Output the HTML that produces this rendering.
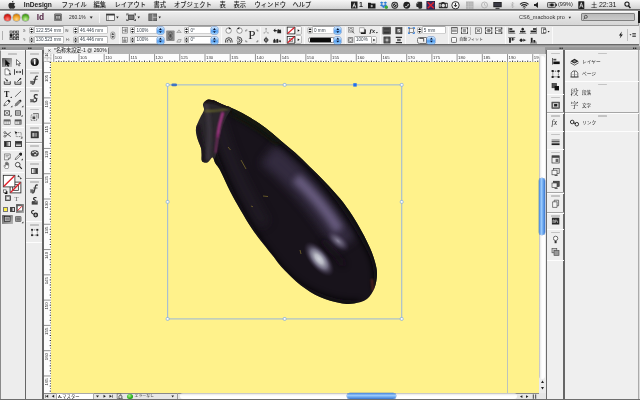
<!DOCTYPE html>
<html lang="ja"><head><meta charset="utf-8"><title>InDesign</title><style>
html,body{margin:0;padding:0}
body{width:640px;height:400px;overflow:hidden;position:relative;background:#969696;font-family:"Liberation Sans","Noto Sans CJK JP",sans-serif;}
body div,body svg{position:absolute;box-sizing:border-box}
.t{white-space:nowrap;line-height:1.2}
</style></head><body>
<div style="left:-4px;top:-4px;width:648px;height:408px;background:#b0b0b0;filter:blur(.3px)"><div style="left:4px;top:4px;width:640px;height:400px;background:#969696;overflow:hidden">
<div style="left:0px;top:0px;width:640px;height:10px;background:linear-gradient(#f6f6f6,#e2e2e2 60%,#d2d2d2);border-bottom:1px solid #6e6e6e"></div>
<svg style="left:8px;top:0px;" width="8" height="10" viewBox="-0.4 -0.5 8 10" preserveAspectRatio="none"><path d="M3.500 2.600C2.900 2.600 2.500 2.200 1.900 2.200 .9 2.200 0 3.100 0 4.700 0 6.300 1.100 8.300 2 8.300 2.500 8.300 2.800 8 3.500 8 4.200 8 4.400 8.300 5 8.300 5.900 8.300 6.600 6.900 6.900 6.100 6.200 5.800 5.800 5.200 5.800 4.500 5.800 3.800 6.100 3.300 6.700 3 6.300 2.500 5.700 2.200 5.100 2.200 4.400 2.200 4 2.600 3.500 2.600ZM3.400 2.100C3.400 1.200 4.100 .4 5 .3 5.100 1.200 4.400 2.100 3.400 2.100Z" fill="#2c2c2c"/></svg>
<div class="t" style="left:23.8px;top:0.8px;font-size:6.65px;color:#1c1c1c;font-weight:bold;font-weight:bold">InDesign</div>
<div class="t" style="left:61.5px;top:1px;font-size:6.3px;color:#1c1c1c;font-weight:normal;font-weight:500">ファイル</div>
<div class="t" style="left:93.5px;top:1px;font-size:6.3px;color:#1c1c1c;font-weight:normal;font-weight:500">編集</div>
<div class="t" style="left:114.5px;top:1px;font-size:6.3px;color:#1c1c1c;font-weight:normal;font-weight:500">レイアウト</div>
<div class="t" style="left:153.5px;top:1px;font-size:6.3px;color:#1c1c1c;font-weight:normal;font-weight:500">書式</div>
<div class="t" style="left:174px;top:1px;font-size:6.3px;color:#1c1c1c;font-weight:normal;font-weight:500">オブジェクト</div>
<div class="t" style="left:219.5px;top:1px;font-size:6.3px;color:#1c1c1c;font-weight:normal;font-weight:500">表</div>
<div class="t" style="left:233.5px;top:1px;font-size:6.3px;color:#1c1c1c;font-weight:normal;font-weight:500">表示</div>
<div class="t" style="left:254.5px;top:1px;font-size:6.3px;color:#1c1c1c;font-weight:normal;font-weight:500">ウィンドウ</div>
<div class="t" style="left:292.5px;top:1px;font-size:6.3px;color:#1c1c1c;font-weight:normal;font-weight:500">ヘルプ</div>
<svg style="left:351px;top:1px;" width="13" height="8" viewBox="0 -0.5 13 8" preserveAspectRatio="none"><path d="M0 0h6.500v7H0z" fill="#222"/><path d="M3.250 1L1.300 6h1l.4-1.200h1.100L4.200 6h1zM3.250 2.600l.35 1.400h-.7z" fill="#eee"/></svg>
<div class="t" style="left:359px;top:0.8px;font-size:7px;color:#222;font-weight:bold;">1</div>
<svg style="left:368px;top:1px;" width="8" height="8" viewBox="0 -0.5 8 8" preserveAspectRatio="none"><path d="M0 1.200h2.500l.8.900H7.500V7H0z" fill="#1a1a1a"/><path d="M3.750 3.300v2.400M2.600 4.500h2.300" stroke="#ddd" stroke-width=".8"/></svg>
<svg style="left:379px;top:1px;" width="10" height="9" viewBox="-0.5 -0.2 10 9" preserveAspectRatio="none"><path d="M2.200.4L4 1.500 2.200 2.700.4 1.500zM5.800.4L7.600 1.500 5.800 2.700 4 1.500zM2.200 2.900L4 4 2.200 5.200.4 4zM5.800 2.900L7.600 4 5.800 5.200 4 4zM4 4.400l1.700 1.100L4 6.700 2.300 5.500z" fill="#2b7bd6"/><circle cx="6.800" cy="6" r="1.700" fill="#3aa93a"/></svg>
<svg style="left:391px;top:1px;" width="8" height="8" viewBox="0 -0.5 8 8" preserveAspectRatio="none"><circle cx="3.750" cy="3.750" r="3.400" fill="#2a2a2a"/><circle cx="3.750" cy="3.750" r="2.200" fill="none" stroke="#ddd" stroke-width=".7"/><path d="M2.500 5l2.500-2.500" stroke="#ddd" stroke-width=".8"/></svg>
<svg style="left:403px;top:1px;" width="8" height="8" viewBox="0 -0.5 8 8" preserveAspectRatio="none"><circle cx="3.750" cy="3.750" r="3.400" fill="#222"/><path d="M2.200 5.200c1.500.3 3-.8 3.100-2.700" stroke="#e8e8e8" stroke-width="1" fill="none"/></svg>
<svg style="left:416px;top:1px;" width="7" height="8" viewBox="0 -0.5 7 8" preserveAspectRatio="none"><path d="M1.800.3h3.200c.8 0 1.200.5 1.200 1.300v3.900c0 1-.5 1.700-1.500 1.700H3.500c-.7 0-1-.4-1-1 0-.5-.3-.7-.9-.7C.7 5.500.3 5 .3 4.200V2z" fill="#2a2a2a"/><path d="M.3 2h1.500V.3" stroke="#bbb" stroke-width=".5" fill="none"/></svg>
<svg style="left:426px;top:1px;" width="9" height="9" viewBox="-0.5 0 9 9" preserveAspectRatio="none"><rect x=".4" y=".4" width="7.700" height="7.700" fill="#3a2a6a" stroke="#1a1a3a" stroke-width=".8"/><path d="M1.200 1.200L7.300 7.300M7.300 1.200L1.200 7.300" stroke="#e0222a" stroke-width="1.300"/></svg>
<svg style="left:438px;top:2px;" width="10" height="7" viewBox="-0.5 0 10 7" preserveAspectRatio="none"><rect x=".3" y=".8" width="8.900" height="5.400" rx=".8" fill="#2a2a2a"/><rect x="3" y="0" width="3" height="1.200" fill="#2a2a2a"/><circle cx="4.750" cy="3.500" r="1.700" fill="#e0e0e0"/><rect x="1" y="1.800" width="1.200" height="3" fill="#ddd"/><rect x="7.300" y="1.800" width="1.200" height="3" fill="#ddd"/></svg>
<svg style="left:451px;top:1px;" width="9" height="9" viewBox="0 0 9 9" preserveAspectRatio="none"><circle cx="4.500" cy="4.250" r="3.700" fill="#f4f4f4" stroke="#222" stroke-width=".9"/><path d="M4.500 1.800v3.600M3 4l1.500 1.800L6 4" stroke="#222" stroke-width=".9" fill="none"/></svg>
<svg style="left:466px;top:1px;" width="8" height="8" viewBox="0 -0.5 8 8" preserveAspectRatio="none"><rect width="7.500" height="7.500" fill="#b4b4b4"/><path d="M2.500 0v7.500M5 0v7.500M0 2.500h7.500M0 5h7.500" stroke="#c8c8c8" stroke-width=".5"/></svg>
<svg style="left:481px;top:1px;" width="7" height="8" viewBox="0 -0.5 7 8" preserveAspectRatio="none"><circle cx="3.500" cy="3.500" r="3" fill="none" stroke="#aaa" stroke-width=".8"/><path d="M3.500 1.600v2l1.400 1" stroke="#aaa" stroke-width=".7" fill="none"/></svg>
<svg style="left:493px;top:1px;" width="9" height="8" viewBox="0 -0.8 9 8" preserveAspectRatio="none"><rect x=".3" y=".2" width="8.400" height="5.200" fill="#222"/><rect x="1.200" y="1" width="6.600" height="3.500" fill="#3a3a44"/><path d="M2.500 6.500h4" stroke="#222" stroke-width="1"/></svg>
<svg style="left:510px;top:1px;" width="5" height="8" viewBox="-0.5 -0.5 5 8" preserveAspectRatio="none"><path d="M.6 2l2.600 3L1.900 6.500V.5l1.300 1.500-2.600 3" stroke="#aaa" stroke-width=".6" fill="none"/></svg>
<svg style="left:519px;top:1px;" width="10" height="8" viewBox="-0.5 -0.8 10 8" preserveAspectRatio="none"><path d="M.5 2.500a6 6 0 0 1 8.500 0" stroke="#222" stroke-width="1.100" fill="none"/><path d="M1.900 4a4 4 0 0 1 5.700 0" stroke="#222" stroke-width="1.100" fill="none"/><path d="M3.300 5.400a2 2 0 0 1 2.900 0" stroke="#222" stroke-width="1" fill="none"/><circle cx="4.750" cy="6.300" r=".6" fill="#222"/></svg>
<svg style="left:534px;top:2px;" width="6" height="6" viewBox="0 0 6 6" preserveAspectRatio="none"><path d="M0 2h1.600L4 0v6L1.600 4H0z" fill="#222"/></svg>
<svg style="left:547px;top:2px;" width="10" height="6" viewBox="0 -0.2 10 6" preserveAspectRatio="none"><rect x=".4" y=".4" width="8.200" height="4.700" rx=".8" fill="none" stroke="#222" stroke-width=".8"/><rect x="8.900" y="1.700" width=".9" height="2.100" fill="#222"/><rect x="1.200" y="1.200" width="6.600" height="3.100" fill="#b8b8b8"/><path d="M2.400 2.750h1.400M3.800 1.700h2v2.100h-2zM5.800 2.200h1M5.800 3.300h1" stroke="#1a1a1a" stroke-width=".7" fill="#1a1a1a"/></svg>
<div class="t" style="left:558px;top:1.4px;font-size:5.6px;color:#222;font-weight:normal;">(99%)</div>
<svg style="left:578px;top:1px;" width="7" height="8" viewBox="-0.3 -0.2 7 8" preserveAspectRatio="none"><rect width="6" height="7.800" rx=".6" fill="#1e1e1e"/><path d="M3 1.500L1.400 6.300M3 1.500l1.600 4.800M2 4.700h2" stroke="#f0f0f0" stroke-width=".8" fill="none"/></svg>
<div class="t" style="left:591.1px;top:1.1px;font-size:6.2px;color:#1a1a1a;font-weight:normal;font-weight:500">土</div>
<div class="t" style="left:598.9px;top:0.7px;font-size:7.05px;color:#1a1a1a;font-weight:normal;">22:31</div>
<svg style="left:624px;top:1px;" width="7" height="8" viewBox="-0.3 -0.4 7 8" preserveAspectRatio="none"><circle cx="2.700" cy="2.700" r="2.100" fill="none" stroke="#1a1a1a" stroke-width="1.100"/><path d="M4.200 4.400L6.100 6.700" stroke="#1a1a1a" stroke-width="1.400"/></svg>
<div style="left:0px;top:10.5px;width:640px;height:14.5px;background:linear-gradient(#eeeeee,#e0e0e0 50%,#d6d6d6);border-top:1px solid #fafafa"></div>
<div style="left:638.3px;top:10.5px;width:1.7px;height:12px;background:#1a1a1a"></div>
<div style="left:638.3px;top:22.5px;width:1.7px;height:24px;background:#cfcfcf;border-left:0.600px solid #9a9a9a"></div>
<div style="left:4.0px;top:13.700px;width:7px;height:7px;border-radius:50%;background:radial-gradient(circle at 50% 75%,#ff8a80 0%,#d9231c 55%,#8a1510 100%);box-shadow:0 0 0 .4px rgba(60,60,60,.6)"></div>
<div style="left:13.100000000000001px;top:13.700px;width:7px;height:7px;border-radius:50%;background:radial-gradient(circle at 50% 75%,#ffd98a 0%,#eb9a1c 55%,#9a5a10 100%);box-shadow:0 0 0 .4px rgba(60,60,60,.6)"></div>
<div style="left:22.2px;top:13.700px;width:7px;height:7px;border-radius:50%;background:radial-gradient(circle at 50% 75%,#c8f0a0 0%,#5ab02c 55%,#2a6a14 100%);box-shadow:0 0 0 .4px rgba(60,60,60,.6)"></div>
<div class="t" style="left:36.8px;top:12.2px;font-size:8.4px;color:#4d1f3f;font-weight:bold;letter-spacing:-.1px">Id</div>
<svg style="left:54px;top:13px;" width="8" height="8" viewBox="0 -0.5 8 8" preserveAspectRatio="none"><rect x=".3" y=".3" width="7.400" height="6.900" rx=".8" fill="#8a8a8a" stroke="#5a5a5a" stroke-width=".6"/><rect x="1.400" y="1.600" width="5.200" height="4.400" fill="#4a4a4a"/><rect x="2" y="2.400" width="1.800" height="2.800" fill="#aaa"/><rect x="4.300" y="2.400" width="1.700" height="2.800" fill="#bbb"/></svg>
<div class="t" style="left:69px;top:13.6px;font-size:6px;color:#2a2a2a;font-weight:normal;transform:scaleX(0.82);transform-origin:0 0;">260.1%</div>
<svg style="left:89px;top:16px;" width="4" height="3" viewBox="-0.747 -0.655 4.267 3.273" preserveAspectRatio="none"><path d="M0 0h3.200L1.600 2.400z" fill="#222"/></svg>
<div style="left:99px;top:12.5px;width:1px;height:10px;background:linear-gradient(90deg,#bcbcbc 50%,#f4f4f4 50%)"></div>
<svg style="left:106px;top:13px;" width="9" height="8" viewBox="0 -0.6 9 8" preserveAspectRatio="none"><rect x=".4" y=".4" width="8.200" height="6.600" fill="#f4f4f4" stroke="#444" stroke-width=".7"/><rect x=".4" y=".4" width="8.200" height="1.500" fill="#3a3a3a"/><path d="M2.200 2v5" stroke="#555" stroke-width=".5"/></svg>
<svg style="left:116px;top:16px;" width="3" height="3" viewBox="-0.2 -0.5 3 3" preserveAspectRatio="none"><path d="M0 0h2.400L1.200 2z" fill="#222"/></svg>
<svg style="left:126px;top:13px;" width="10" height="8" viewBox="-0.5 -0.6 10 8" preserveAspectRatio="none"><rect x="2" y="1.400" width="5.500" height="4.600" fill="#777" stroke="#333" stroke-width=".7"/><path d="M0 .4h2.200M0 7h2.200M7.300 .4h2.200M7.300 7h2.200M.4 0v2M.4 5.400v2M9.100 0v2M9.100 5.400v2" stroke="#333" stroke-width=".7"/></svg>
<svg style="left:137px;top:16px;" width="3" height="3" viewBox="-0.5 -0.5 3 3" preserveAspectRatio="none"><path d="M0 0h2.400L1.200 2z" fill="#222"/></svg>
<svg style="left:148px;top:13px;" width="9" height="8" viewBox="-0.5 -0.6 9 8" preserveAspectRatio="none"><rect x=".3" y=".3" width="7.900" height="6.800" fill="#777" stroke="#444" stroke-width=".6"/><path d="M4.250 .3v6.800M4.250 3.700h4" stroke="#ddd" stroke-width=".6"/></svg>
<svg style="left:158px;top:16px;" width="3" height="3" viewBox="-0.5 -0.5 3 3" preserveAspectRatio="none"><path d="M0 0h2.400L1.200 2z" fill="#222"/></svg>
<div class="t" style="left:518.6px;top:13.5px;font-size:6px;color:#333;font-weight:normal;transform:scaleX(0.92);transform-origin:0 0;">CS6_macbook pro</div>
<svg style="left:568px;top:16px;" width="3" height="3" viewBox="-0.65 -0.842 3.25 3.158" preserveAspectRatio="none"><path d="M0 0h2.600L1.300 2z" fill="#222"/></svg>
<div style="left:580.5px;top:13.4px;width:54px;height:7.6px;background:linear-gradient(#bababa,#cbcbcb);border:0.700px solid #808080;border-radius:1px"></div>
<svg style="left:583px;top:14px;" width="5" height="6" viewBox="0 -0.8 5 6" preserveAspectRatio="none"><circle cx="2.800" cy="2" r="1.500" fill="none" stroke="#333" stroke-width=".7"/><path d="M1.800 3.100L.5 4.600" stroke="#333" stroke-width=".8"/></svg>
<div style="left:0px;top:25px;width:638.5px;height:20px;background:#ececec;border-top:0.700px solid #9a9a9a;border-bottom:0.800px solid #6a6a6a"></div>
<div style="left:2px;top:30.5px;width:1px;height:9.5px;background:#b0b0b0"></div>
<svg style="left:9px;top:30px;" width="10" height="10" viewBox="-0.5 -0.5 10 10" preserveAspectRatio="none"><rect x="0.5" y="0.5" width="2.200" height="2.200" fill="#f8f8f8" stroke="#222" stroke-width=".6"/><rect x="0.5" y="3.8" width="2.200" height="2.200" fill="#111" stroke="#222" stroke-width=".6"/><rect x="0.5" y="7.1" width="2.200" height="2.200" fill="#f8f8f8" stroke="#222" stroke-width=".6"/><rect x="3.8" y="0.5" width="2.200" height="2.200" fill="#f8f8f8" stroke="#222" stroke-width=".6"/><rect x="3.8" y="3.8" width="2.200" height="2.200" fill="#f8f8f8" stroke="#222" stroke-width=".6"/><rect x="3.8" y="7.1" width="2.200" height="2.200" fill="#f8f8f8" stroke="#222" stroke-width=".6"/><rect x="7.1" y="0.5" width="2.200" height="2.200" fill="#f8f8f8" stroke="#222" stroke-width=".6"/><rect x="7.1" y="3.8" width="2.200" height="2.200" fill="#f8f8f8" stroke="#222" stroke-width=".6"/><rect x="7.1" y="7.1" width="2.200" height="2.200" fill="#f8f8f8" stroke="#222" stroke-width=".6"/><path d="M1.600 1.600h6.600v6.600H1.600z" fill="none" stroke="#222" stroke-width=".3"/></svg>
<div class="t" style="left:22.5px;top:27.9px;font-size:4.3px;color:#444;font-weight:normal;transform:scaleX(0.8);transform-origin:0 0;">X:</div>
<div class="t" style="left:22.5px;top:37.4px;font-size:4.3px;color:#444;font-weight:normal;transform:scaleX(0.8);transform-origin:0 0;">Y:</div>
<svg style="left:29px;top:27px;" width="5" height="7" viewBox="-0.2 0 5 7" preserveAspectRatio="none"><rect x=".3" y=".3" width="4.200" height="6.200" rx="1.400" fill="#fcfcfc" stroke="#888" stroke-width=".55"/><path d="M2.400 .9L3.900 2.900H.9zM2.400 5.900L3.900 3.900H.9z" fill="#1a1a1a"/></svg>
<div style="left:34.6px;top:27.4px;width:28.8px;height:6px;background:#fff;box-shadow:0 0 0 .5px #b4b4b4, 0 -.5px 0 .3px #8a8a8a"></div>
<div class="t" style="left:35.800000000000004px;top:27.7px;font-size:4.6px;color:#3c4650;font-weight:normal;">122.554 mm</div>
<svg style="left:29px;top:36px;" width="5" height="8" viewBox="-0.2 -0.5 5 8" preserveAspectRatio="none"><rect x=".3" y=".3" width="4.200" height="6.200" rx="1.400" fill="#fcfcfc" stroke="#888" stroke-width=".55"/><path d="M2.400 .9L3.900 2.900H.9zM2.400 5.900L3.900 3.900H.9z" fill="#1a1a1a"/></svg>
<div style="left:34.6px;top:36.9px;width:28.8px;height:6px;background:#fff;box-shadow:0 0 0 .5px #b4b4b4, 0 -.5px 0 .3px #8a8a8a"></div>
<div class="t" style="left:35.800000000000004px;top:37.199999999999996px;font-size:4.6px;color:#3c4650;font-weight:normal;">130.523 mm</div>
<div class="t" style="left:65.3px;top:27.9px;font-size:4.3px;color:#444;font-weight:normal;transform:scaleX(0.8);transform-origin:0 0;">W:</div>
<div class="t" style="left:65.6px;top:37.4px;font-size:4.3px;color:#444;font-weight:normal;transform:scaleX(0.85);transform-origin:0 0;">H:</div>
<svg style="left:73px;top:27px;" width="5" height="7" viewBox="-0.2 0 5 7" preserveAspectRatio="none"><rect x=".3" y=".3" width="4.200" height="6.200" rx="1.400" fill="#fcfcfc" stroke="#888" stroke-width=".55"/><path d="M2.400 .9L3.900 2.900H.9zM2.400 5.900L3.900 3.900H.9z" fill="#1a1a1a"/></svg>
<div style="left:78.8px;top:27.4px;width:28.6px;height:6px;background:#fff;box-shadow:0 0 0 .5px #b4b4b4, 0 -.5px 0 .3px #8a8a8a"></div>
<div class="t" style="left:80.0px;top:27.7px;font-size:4.6px;color:#3c4650;font-weight:normal;">46.446 mm</div>
<svg style="left:73px;top:36px;" width="5" height="8" viewBox="-0.2 -0.5 5 8" preserveAspectRatio="none"><rect x=".3" y=".3" width="4.200" height="6.200" rx="1.400" fill="#fcfcfc" stroke="#888" stroke-width=".55"/><path d="M2.400 .9L3.900 2.900H.9zM2.400 5.900L3.900 3.900H.9z" fill="#1a1a1a"/></svg>
<div style="left:78.8px;top:36.9px;width:28.6px;height:6px;background:#fff;box-shadow:0 0 0 .5px #b4b4b4, 0 -.5px 0 .3px #8a8a8a"></div>
<div class="t" style="left:80.0px;top:37.199999999999996px;font-size:4.6px;color:#3c4650;font-weight:normal;">46.446 mm</div>
<svg style="left:110px;top:31px;" width="6" height="9" viewBox="-0.3 -0.5 6 9" preserveAspectRatio="none"><rect x=".4" y=".4" width="4.200" height="7.200" rx="2" fill="#d8d8d8" stroke="#666" stroke-width=".5"/><path d="M2.500 1.400L3.800 3.200H1.200zM2.500 6.600L3.800 4.800H1.200z" fill="#222"/></svg>
<div style="left:118.8px;top:27px;width:1px;height:16.5px;background:linear-gradient(90deg,#b0b0b0 50%,#fafafa 50%)"></div>
<svg style="left:122px;top:27px;" width="6" height="7" viewBox="0 -0.4 6 7" preserveAspectRatio="none"><rect x=".3" y=".3" width="5" height="5.400" fill="#eee" stroke="#555" stroke-width=".5"/><rect x="2.600" y="1.200" width="2" height="3.600" fill="#888"/><path d="M.8 3h1.600" stroke="#222" stroke-width=".5"/></svg>
<svg style="left:122px;top:36px;" width="6" height="7" viewBox="0 -0.9 6 7" preserveAspectRatio="none"><rect x=".3" y=".3" width="5" height="5.400" fill="#eee" stroke="#555" stroke-width=".5"/><rect x="1.200" y="2.600" width="3.200" height="2.400" fill="#888"/><path d="M2.800 .8v1.600" stroke="#222" stroke-width=".5"/></svg>
<svg style="left:130px;top:27px;" width="5" height="7" viewBox="-0.1 0 5 7" preserveAspectRatio="none"><rect x=".3" y=".3" width="4.200" height="6.200" rx="1.400" fill="#fcfcfc" stroke="#888" stroke-width=".55"/><path d="M2.400 .9L3.900 2.900H.9zM2.400 5.900L3.900 3.900H.9z" fill="#1a1a1a"/></svg>
<div style="left:135.4px;top:27.4px;width:22px;height:6px;background:#fff;box-shadow:0 0 0 .5px #b4b4b4, 0 -.5px 0 .3px #8a8a8a"></div>
<div class="t" style="left:136.6px;top:27.7px;font-size:4.6px;color:#3c4650;font-weight:normal;">100%</div>
<div style="left:156.89999999999998px;top:27.0px;width:7px;height:7.2px;border-radius:1.800px;background:linear-gradient(#cfe6fd,#7ab8f6 45%,#4c98ee 55%,#9ad0fc);box-shadow:0 0 0 .4px #4a7cc8"></div>
<svg style="left:159px;top:28px;" width="3" height="6" viewBox="0 -0.1 3 6" preserveAspectRatio="none"><path d="M1.400 0L2.800 1.900H0zM1.400 5L2.800 3.100H0z" fill="#0a1430"/></svg>
<svg style="left:130px;top:36px;" width="5" height="8" viewBox="-0.1 -0.5 5 8" preserveAspectRatio="none"><rect x=".3" y=".3" width="4.200" height="6.200" rx="1.400" fill="#fcfcfc" stroke="#888" stroke-width=".55"/><path d="M2.400 .9L3.900 2.900H.9zM2.400 5.900L3.900 3.900H.9z" fill="#1a1a1a"/></svg>
<div style="left:135.4px;top:36.9px;width:22px;height:6px;background:#fff;box-shadow:0 0 0 .5px #b4b4b4, 0 -.5px 0 .3px #8a8a8a"></div>
<div class="t" style="left:136.6px;top:37.199999999999996px;font-size:4.6px;color:#3c4650;font-weight:normal;">100%</div>
<div style="left:156.89999999999998px;top:36.5px;width:7px;height:7.2px;border-radius:1.800px;background:linear-gradient(#cfe6fd,#7ab8f6 45%,#4c98ee 55%,#9ad0fc);box-shadow:0 0 0 .4px #4a7cc8"></div>
<svg style="left:159px;top:37px;" width="3" height="6" viewBox="0 -0.6 3 6" preserveAspectRatio="none"><path d="M1.400 0L2.800 1.900H0zM1.400 5L2.800 3.100H0z" fill="#0a1430"/></svg>
<svg style="left:166px;top:30px;" width="9" height="11" viewBox="-0.2 -0.5 9 11" preserveAspectRatio="none"><rect width="8.400" height="10.500" rx=".8" fill="#8a8a8a"/><rect x="2.600" y="1.500" width="3.200" height="3.600" rx="1.400" fill="none" stroke="#555" stroke-width=".8"/><rect x="2.600" y="5.400" width="3.200" height="3.600" rx="1.400" fill="none" stroke="#555" stroke-width=".8"/><path d="M4.200 3.500v3.600" stroke="#444" stroke-width=".9"/></svg>
<svg style="left:176px;top:29px;" width="6" height="4" viewBox="-0.5 0 6 4" preserveAspectRatio="none"><path d="M.3 3.700h4.400L2.500 .8z" fill="#ddd" stroke="#555" stroke-width=".4"/></svg>
<svg style="left:176px;top:38px;" width="6" height="5" viewBox="-0.5 -0.5 6 5" preserveAspectRatio="none"><path d="M.3 3.700h3.400L4.700 1H1.700z" fill="#ddd" stroke="#555" stroke-width=".4"/></svg>
<svg style="left:184px;top:27px;" width="5" height="7" viewBox="-0.1 0 5 7" preserveAspectRatio="none"><rect x=".3" y=".3" width="4.200" height="6.200" rx="1.400" fill="#fcfcfc" stroke="#888" stroke-width=".55"/><path d="M2.400 .9L3.900 2.900H.9zM2.400 5.900L3.900 3.900H.9z" fill="#1a1a1a"/></svg>
<div style="left:189.3px;top:27.4px;width:22px;height:6px;background:#fff;box-shadow:0 0 0 .5px #b4b4b4, 0 -.5px 0 .3px #8a8a8a"></div>
<div class="t" style="left:190.5px;top:27.7px;font-size:4.6px;color:#3c4650;font-weight:normal;">0°</div>
<div style="left:210.89999999999998px;top:27.0px;width:7px;height:7.2px;border-radius:1.800px;background:linear-gradient(#cfe6fd,#7ab8f6 45%,#4c98ee 55%,#9ad0fc);box-shadow:0 0 0 .4px #4a7cc8"></div>
<svg style="left:213px;top:28px;" width="3" height="6" viewBox="0 -0.1 3 6" preserveAspectRatio="none"><path d="M1.400 0L2.800 1.900H0zM1.400 5L2.800 3.100H0z" fill="#0a1430"/></svg>
<svg style="left:184px;top:36px;" width="5" height="8" viewBox="-0.1 -0.5 5 8" preserveAspectRatio="none"><rect x=".3" y=".3" width="4.200" height="6.200" rx="1.400" fill="#fcfcfc" stroke="#888" stroke-width=".55"/><path d="M2.400 .9L3.900 2.900H.9zM2.400 5.900L3.900 3.900H.9z" fill="#1a1a1a"/></svg>
<div style="left:189.3px;top:36.9px;width:22px;height:6px;background:#fff;box-shadow:0 0 0 .5px #b4b4b4, 0 -.5px 0 .3px #8a8a8a"></div>
<div class="t" style="left:190.5px;top:37.199999999999996px;font-size:4.6px;color:#3c4650;font-weight:normal;">0°</div>
<div style="left:210.89999999999998px;top:36.5px;width:7px;height:7.2px;border-radius:1.800px;background:linear-gradient(#cfe6fd,#7ab8f6 45%,#4c98ee 55%,#9ad0fc);box-shadow:0 0 0 .4px #4a7cc8"></div>
<svg style="left:213px;top:37px;" width="3" height="6" viewBox="0 -0.6 3 6" preserveAspectRatio="none"><path d="M1.400 0L2.800 1.900H0zM1.400 5L2.800 3.100H0z" fill="#0a1430"/></svg>
<div style="left:221px;top:27px;width:1px;height:16.5px;background:linear-gradient(90deg,#b0b0b0 50%,#fafafa 50%)"></div>
<svg style="left:225px;top:27px;" width="8" height="7" viewBox="-0.3 0 8 7" preserveAspectRatio="none"><circle cx="3.300" cy="3.600" r="2.700" fill="#f8f8f8" stroke="#666" stroke-width=".65"/><path d="M3.400 .2L5.800 1.200 3.600 2.400Z" fill="#222"/></svg>
<svg style="left:236px;top:27px;" width="7" height="7" viewBox="0 0 7 7" preserveAspectRatio="none"><circle cx="3.500" cy="3.600" r="2.700" fill="#f8f8f8" stroke="#666" stroke-width=".65"/><path d="M3.400 .2L1 1.200 3.200 2.400Z" fill="#222"/></svg>
<svg style="left:225px;top:36px;" width="8" height="8" viewBox="0 -0.8 8 8" preserveAspectRatio="none"><path d="M.5 5.800V4.200A3.300 3.300 0 0 1 7.100 4.200V5.800M2.200 5.800V4.400A1.600 1.600 0 0 1 5.400 4.400V5.800" stroke="#333" stroke-width=".85" fill="none"/><path d="M3.800 0V6.400" stroke="#555" stroke-width=".4" stroke-dasharray=".7 .5"/></svg>
<svg style="left:236px;top:36px;" width="7" height="9" viewBox="-0.4 -0.6 7 9" preserveAspectRatio="none"><path d="M.6 .5H2.200A3.300 3.300 0 0 1 2.200 7.100H.6M.6 2.200H2A1.600 1.600 0 0 1 2 5.400H.6" stroke="#333" stroke-width=".85" fill="none"/><path d="M0 3.800H6.400" stroke="#555" stroke-width=".4" stroke-dasharray=".7 .5"/></svg>
<svg style="left:245px;top:29px;" width="14" height="14" viewBox="-0.4 -0.6 14 14" preserveAspectRatio="none"><path d="M.4 2V.4H2M10.800 .4h1.600V2M12.400 10.600v1.600h-1.600M2 12.200H.4v-1.600" stroke="#444" stroke-width=".6" fill="none"/><text x="6.600" y="9.800" text-anchor="middle" font-family="Liberation Serif,serif" font-size="13" fill="#222">P</text></svg>
<div style="left:260.3px;top:27px;width:1px;height:16.5px;background:linear-gradient(90deg,#b0b0b0 50%,#fafafa 50%)"></div>
<svg style="left:263px;top:27px;" width="6" height="7" viewBox="-0.3 -0.6 6 7" preserveAspectRatio="none"><circle cx="2.800" cy="1.200" r=".9" fill="#999"/><path d="M2.800 2v2M.8 5.500l2-1.500 2 1.500" stroke="#999" stroke-width=".6" fill="none"/><circle cx=".8" cy="5.300" r=".6" fill="#999"/><circle cx="4.800" cy="5.300" r=".6" fill="#999"/></svg>
<svg style="left:273px;top:27px;" width="9" height="7" viewBox="-0.3 -0.6 9 7" preserveAspectRatio="none"><path d="M0 3l2-2v1.400h1.500v1.200H2V5z" fill="#222"/><path d="M4 5.600V2.400l1-.9 1 .9.900-.7.900 1.200v2.700z" fill="#222"/></svg>
<svg style="left:263px;top:36px;" width="6" height="8" viewBox="-0.3 -0.8 6 8" preserveAspectRatio="none"><circle cx="2.800" cy="3.200" r="1.800" fill="none" stroke="#222" stroke-width=".8"/><path d="M2.800 0v6.400M.6 3.200h4.400" stroke="#222" stroke-width=".7"/></svg>
<svg style="left:273px;top:37px;" width="9" height="7" viewBox="-0.3 -0.2 9 7" preserveAspectRatio="none"><path d="M0 5.600V3l1.200-1.600L2.400 3v2.600zM3 5.600V2.400l1-.9 1 .9v3.200z" fill="#222"/><path d="M5.400 3.400h1.200V2.200l1.200 1.800-1.200 1.800V4.600H5.400z" fill="#222"/></svg>
<div style="left:284px;top:27px;width:1px;height:16.5px;background:linear-gradient(90deg,#b0b0b0 50%,#fafafa 50%)"></div>
<svg style="left:286px;top:26px;" width="10" height="9" viewBox="-0.8 -0.7 10 9" preserveAspectRatio="none"><rect x=".4" y=".4" width="7.6000000000000005" height="6.8" fill="#fff" stroke="#222" stroke-width=".8"/><path d="M.8 6.8L7.6000000000000005 .8" stroke="#e0202a" stroke-width="1.2"/></svg>
<svg style="left:286px;top:36px;" width="10" height="8" viewBox="-0.8 0 10 8" preserveAspectRatio="none"><rect x=".4" y=".4" width="7.600" height="6.800" fill="#fff" stroke="#222" stroke-width=".8"/><rect x="2.400" y="2.200" width="3.600" height="3.200" fill="#ddd" stroke="#444" stroke-width=".5"/><path d="M.8 6.800L7.600 .8" stroke="#e0202a" stroke-width="1.200"/></svg>
<div style="left:296.3px;top:27px;width:4.6px;height:7px;background:linear-gradient(#ffffff,#e6e6e6);box-shadow:0 0 0 .5px #8a8a8a;border-radius:.8px"></div>
<svg style="left:297px;top:29px;" width="3" height="3" viewBox="-0.7 -0.2 3 3" preserveAspectRatio="none"><path d="M0 0L2 1.300 0 2.600z" fill="#111"/></svg>
<div style="left:296.3px;top:36.3px;width:4.6px;height:7px;background:linear-gradient(#ffffff,#e6e6e6);box-shadow:0 0 0 .5px #8a8a8a;border-radius:.8px"></div>
<svg style="left:297px;top:38px;" width="3" height="4" viewBox="-0.7 -0.5 3 4" preserveAspectRatio="none"><path d="M0 0L2 1.300 0 2.600z" fill="#111"/></svg>
<div style="left:304px;top:27px;width:1px;height:16.5px;background:linear-gradient(90deg,#b0b0b0 50%,#fafafa 50%)"></div>
<svg style="left:307px;top:27px;" width="6" height="7" viewBox="-0.6 0 6 7" preserveAspectRatio="none"><rect x=".3" y=".3" width="4.200" height="6.200" rx="1.400" fill="#fcfcfc" stroke="#888" stroke-width=".55"/><path d="M2.400 .9L3.900 2.900H.9zM2.400 5.900L3.900 3.900H.9z" fill="#1a1a1a"/></svg>
<div style="left:312.8px;top:27.4px;width:21.6px;height:6px;background:#fff;box-shadow:0 0 0 .5px #b4b4b4, 0 -.5px 0 .3px #8a8a8a"></div>
<div class="t" style="left:314.0px;top:27.7px;font-size:4.6px;color:#3c4650;font-weight:normal;">0 mm</div>
<div style="left:334.2px;top:27.0px;width:7.2px;height:7.2px;border-radius:1.800px;background:linear-gradient(#cfe6fd,#7ab8f6 45%,#4c98ee 55%,#9ad0fc);box-shadow:0 0 0 .4px #4a7cc8"></div>
<svg style="left:336px;top:28px;" width="4" height="6" viewBox="-0.4 -0.1 4 6" preserveAspectRatio="none"><path d="M1.400 0L2.800 1.900H0zM1.400 5L2.800 3.100H0z" fill="#0a1430"/></svg>
<div style="left:307.7px;top:36.6px;width:27px;height:6.8px;background:#fff;border:0.500px solid #888;border-radius:2.500px"></div>
<div style="left:309.8px;top:38.0px;width:21.4px;height:3.6px;background:#0a0a0a;border-radius:.6px"></div>
<div style="left:334.2px;top:36.5px;width:7.2px;height:7.2px;border-radius:1.800px;background:linear-gradient(#cfe6fd,#7ab8f6 45%,#4c98ee 55%,#9ad0fc);box-shadow:0 0 0 .4px #4a7cc8"></div>
<svg style="left:336px;top:37px;" width="4" height="6" viewBox="-0.4 -0.6 4 6" preserveAspectRatio="none"><path d="M1.400 0L2.800 1.900H0zM1.400 5L2.800 3.100H0z" fill="#0a1430"/></svg>
<div style="left:345px;top:27px;width:1px;height:16.5px;background:linear-gradient(90deg,#b0b0b0 50%,#fafafa 50%)"></div>
<svg style="left:348px;top:27px;" width="7" height="7" viewBox="-0.3 -0.2 7 7" preserveAspectRatio="none"><rect x=".3" y=".3" width="4.600" height="4.600" fill="#e8e8e8" stroke="#666" stroke-width=".5"/><circle cx="2.600" cy="2.600" r="1.400" fill="none" stroke="#444" stroke-width=".5"/><path d="M3.700 3.800L5.800 6.200" stroke="#444" stroke-width=".8"/></svg>
<svg style="left:359px;top:27px;" width="7" height="8" viewBox="0 -0.4 7 8" preserveAspectRatio="none"><rect x="1.800" y="1.800" width="5" height="4.800" rx=".6" fill="#1a1a1a"/><rect x=".3" y=".3" width="5" height="4.600" rx=".5" fill="#f8f8f8" stroke="#666" stroke-width=".5"/></svg>
<div class="t" style="left:369.500px;top:26.600px;font-size:7px;font-style:italic;font-weight:bold;color:#222;font-family:'Liberation Serif',serif">fx</div>
<svg style="left:376px;top:32px;" width="2" height="2" viewBox="0 0 2 2" preserveAspectRatio="none"><path d="M0 0h1.800L.9 1.400z" fill="#222"/></svg>
<svg style="left:347px;top:37px;" width="7" height="6" viewBox="-0.8 0 7 6" preserveAspectRatio="none"><rect x=".3" y=".3" width="4.800" height="5.400" rx=".5" fill="#8a8a8a" stroke="#666" stroke-width=".5"/><path d="M1.300 1.500L4.100 4.500M4.100 1.500L1.300 4.500" stroke="#fff" stroke-width="1"/></svg>
<div style="left:354.8px;top:36.9px;width:16.4px;height:6px;background:#fff;box-shadow:0 0 0 .5px #b4b4b4, 0 -.5px 0 .3px #8a8a8a"></div>
<div class="t" style="left:356.0px;top:37.199999999999996px;font-size:4.6px;color:#3c4650;font-weight:normal;">100%</div>
<div style="left:372px;top:36.6px;width:4.4px;height:6.8px;background:linear-gradient(#ffffff,#e6e6e6);box-shadow:0 0 0 .5px #8a8a8a;border-radius:.8px"></div>
<svg style="left:373px;top:38px;" width="3" height="4" viewBox="-0.3 -0.7 3 4" preserveAspectRatio="none"><path d="M0 0L2 1.300 0 2.600z" fill="#111"/></svg>
<div style="left:379.6px;top:27px;width:1px;height:16.5px;background:linear-gradient(90deg,#b0b0b0 50%,#fafafa 50%)"></div>
<svg style="left:382px;top:26px;" width="9" height="9" viewBox="-0.4 -0.8 9 9" preserveAspectRatio="none"><rect width="8.600" height="7.800" rx=".8" fill="#5a5a5a"/><rect x="1.400" y="1.200" width="5.800" height="5.400" fill="#2a2a2a"/><path d="M1.400 2.200h5.800M1.400 3.600h5.800M1.400 5h5.800" stroke="#888" stroke-width=".5"/></svg>
<svg style="left:395px;top:27px;" width="8" height="8" viewBox="-0.5 -0.3 8 8" preserveAspectRatio="none"><rect x=".3" y=".3" width="6.200" height="6.200" fill="#4a4a4a" stroke="#333" stroke-width=".6"/><rect x="2" y="1.800" width="2.800" height="3.200" fill="#e4e4e4"/><path d="M2.600 4.400L4.400 2.400" stroke="#333" stroke-width=".6"/></svg>
<svg style="left:383px;top:36px;" width="8" height="8" viewBox="-0.6 -0.6 8 8" preserveAspectRatio="none"><rect x=".3" y=".3" width="6.200" height="6.200" fill="#555" stroke="#333" stroke-width=".6"/><circle cx="3.400" cy="3.400" r="1.700" fill="#ccc" stroke="#333" stroke-width=".4"/><path d="M3.400 .6V6.200M.6 3.400H6.200" stroke="#999" stroke-width=".5"/></svg>
<svg style="left:395px;top:36px;" width="8" height="8" viewBox="-0.5 -0.6 8 8" preserveAspectRatio="none"><path d="M.3 .8h6.200M.3 6h6.200" stroke="#333" stroke-width="1.200"/><rect x="1.600" y="2.200" width="3.600" height="2.400" fill="#666"/></svg>
<div style="left:405.3px;top:27px;width:1px;height:16.5px;background:linear-gradient(90deg,#b0b0b0 50%,#fafafa 50%)"></div>
<svg style="left:408px;top:27px;" width="7" height="7" viewBox="0 0 7 7" preserveAspectRatio="none"><rect x="1.200" y="1.200" width="4.200" height="4.400" fill="#f4f4f4" stroke="#444" stroke-width=".6"/><path d="M.2 2V.3h1.700M4.700 .3h1.700V2M6.400 4.800v1.700H4.700M1.900 6.500H.2V4.800" stroke="#2a7be0" stroke-width=".9" fill="none"/></svg>
<svg style="left:417px;top:27px;" width="5" height="7" viewBox="-0.2 0 5 7" preserveAspectRatio="none"><rect x=".3" y=".3" width="4.200" height="6.200" rx="1.400" fill="#fcfcfc" stroke="#888" stroke-width=".55"/><path d="M2.400 .9L3.900 2.900H.9zM2.400 5.900L3.900 3.900H.9z" fill="#1a1a1a"/></svg>
<div style="left:422.6px;top:27.4px;width:22.6px;height:6px;background:#fff;box-shadow:0 0 0 .5px #b4b4b4, 0 -.5px 0 .3px #8a8a8a"></div>
<div class="t" style="left:423.8px;top:27.7px;font-size:4.6px;color:#3c4650;font-weight:normal;">5 mm</div>
<div style="left:416.5px;top:36.5px;width:10.8px;height:7px;background:linear-gradient(#fff,#e4e4e4);border:0.500px solid #777;border-radius:2.500px 0 0 2.500px"></div>
<svg style="left:419px;top:37px;" width="6" height="5" viewBox="0 -0.9 6 5" preserveAspectRatio="none"><path d="M.3 .5h4.400v3.200" stroke="#222" stroke-width=".8" fill="none"/></svg>
<div style="left:427.3px;top:36.5px;width:8.2px;height:7.2px;border-radius:1.800px;background:linear-gradient(#cfe6fd,#7ab8f6 45%,#4c98ee 55%,#9ad0fc);box-shadow:0 0 0 .4px #4a7cc8"></div>
<svg style="left:430px;top:37px;" width="3" height="6" viewBox="0 -0.6 3 6" preserveAspectRatio="none"><path d="M1.400 0L2.800 1.900H0zM1.400 5L2.800 3.100H0z" fill="#0a1430"/></svg>
<div style="left:448px;top:27px;width:1px;height:16.5px;background:linear-gradient(90deg,#b0b0b0 50%,#fafafa 50%)"></div>
<svg style="left:451px;top:27px;" width="7" height="7" viewBox="0 -0.3 7 7" preserveAspectRatio="none"><rect x=".3" y=".6" width="6.200" height="5.400" fill="#f6f6f6" stroke="#444" stroke-width=".6"/><rect x="1" y="2.200" width="4.800" height="2.400" fill="#999"/><path d="M.3 .3h6.200" stroke="#222" stroke-width=".6"/></svg>
<svg style="left:461px;top:27px;" width="7" height="7" viewBox="0 -0.3 7 7" preserveAspectRatio="none"><rect x=".3" y=".6" width="6.200" height="5.400" fill="#f6f6f6" stroke="#444" stroke-width=".6"/><rect x="1.800" y="1.500" width="3.200" height="3.600" fill="#999"/><path d="M.3 0v2M6.500 0v2M.3 4.600v2M6.500 4.600v2" stroke="#222" stroke-width=".7"/></svg>
<div style="left:470.3px;top:27px;width:0.6px;height:7.5px;background:#b8b8b8"></div>
<svg style="left:475px;top:27px;" width="7" height="7" viewBox="0 -0.3 7 7" preserveAspectRatio="none"><rect x=".3" y=".6" width="6.200" height="5.400" fill="#f6f6f6" stroke="#444" stroke-width=".6"/><path d="M1.400 1.700l3.800 3.200M5.200 1.700L1.400 4.900" stroke="#333" stroke-width=".6"/><rect x="2.200" y="2.300" width="2.400" height="2" fill="#888"/></svg>
<svg style="left:485px;top:27px;" width="8" height="7" viewBox="-0.3 -0.3 8 7" preserveAspectRatio="none"><rect x=".3" y=".6" width="6.200" height="5.400" fill="#f6f6f6" stroke="#444" stroke-width=".6"/><rect x="2" y="1.600" width="2.800" height="3.400" fill="#777"/><path d="M.3 0v2M6.500 0v2M.3 4.600v2M6.500 4.600v2" stroke="#222" stroke-width=".7"/><path d="M1 3.300h1M4.800 3.300h1" stroke="#222" stroke-width=".5"/></svg>
<svg style="left:495px;top:27px;" width="8" height="7" viewBox="-0.3 -0.3 8 7" preserveAspectRatio="none"><rect x=".3" y=".6" width="6.200" height="5.400" fill="#f6f6f6" stroke="#444" stroke-width=".6"/><rect x="3" y="1.600" width="2.800" height="3.400" fill="#888"/><path d="M.3 0v2M6.500 0v2M.3 4.600v2M6.500 4.600v2" stroke="#222" stroke-width=".7"/><path d="M.8 3.300h1.800" stroke="#222" stroke-width=".5"/></svg>
<div style="left:451px;top:36.8px;width:6.2px;height:6.2px;background:linear-gradient(#fff,#e8e8e8);border:0.500px solid #777;border-radius:1.200px"></div>
<div class="t" style="left:459.2px;top:37.7px;font-size:4px;color:#2a2a2a;font-weight:normal;">自動フィット</div>
<div style="left:505.3px;top:27px;width:1px;height:16.5px;background:linear-gradient(90deg,#b0b0b0 50%,#fafafa 50%)"></div>
<svg style="left:508px;top:27px;" width="8" height="7" viewBox="-0.3 -0.6 8 7" preserveAspectRatio="none"><path d="M.4 0v5.200" stroke="#222" stroke-width=".6"/><rect x="1" y=".6" width="3" height="1.600" fill="#222"/><rect x="1" y="3" width="5.400" height="1.800" fill="#222"/><path d="M0 6h7" stroke="#222" stroke-width=".5"/></svg>
<svg style="left:519px;top:27px;" width="8" height="7" viewBox="-0.2 -0.6 8 7" preserveAspectRatio="none"><path d="M3.500 0v5.200" stroke="#222" stroke-width=".5"/><ellipse cx="3.500" cy="1.600" rx="1.400" ry="1.100" fill="#222"/><rect x=".8" y="3.200" width="5.400" height="1.600" fill="#222"/><path d="M0 6h7" stroke="#222" stroke-width=".5"/></svg>
<svg style="left:530px;top:27px;" width="7" height="7" viewBox="0 -0.6 7 7" preserveAspectRatio="none"><path d="M6.600 0v5.200" stroke="#222" stroke-width=".6"/><rect x="3" y=".6" width="3" height="1.600" fill="#222"/><rect x=".6" y="3" width="5.400" height="1.800" fill="#222"/><path d="M0 6h7" stroke="#222" stroke-width=".5"/></svg>
<svg style="left:541px;top:27px;" width="7" height="7" viewBox="0 -0.4 7 7" preserveAspectRatio="none"><path d="M.4 .4h4v5.600H.4zM2 1.600h3" stroke="#222" stroke-width=".6" fill="#f4f4f4"/><rect x="2.600" y="2.400" width="2.400" height="3" fill="#fff" stroke="#222" stroke-width=".5"/></svg>
<svg style="left:547px;top:31px;" width="3" height="2" viewBox="-0.6 0 3 2" preserveAspectRatio="none"><path d="M0 0h2L1 1.600z" fill="#222"/></svg>
<svg style="left:508px;top:37px;" width="8" height="7" viewBox="-0.3 0 8 7" preserveAspectRatio="none"><path d="M0 .4h7" stroke="#222" stroke-width=".6"/><rect x=".8" y="1" width="1.800" height="4.800" fill="#222"/><rect x="3.400" y="1" width="1.800" height="2.600" fill="#222"/><path d="M5.800 1.500v1.500" stroke="#222" stroke-width=".5"/></svg>
<svg style="left:519px;top:37px;" width="8" height="7" viewBox="-0.2 0 8 7" preserveAspectRatio="none"><path d="M0 3.200h7" stroke="#222" stroke-width=".5"/><ellipse cx="2" cy="3.200" rx="1.300" ry="1.700" fill="#222"/><path d="M4.200 1.600l2 1.600-2 1.600z" fill="#222"/></svg>
<svg style="left:530px;top:37px;" width="7" height="7" viewBox="0 0 7 7" preserveAspectRatio="none"><path d="M0 6h7" stroke="#222" stroke-width=".6"/><rect x=".8" y=".8" width="1.800" height="4.800" fill="#222"/><rect x="3.400" y="3" width="1.800" height="2.600" fill="#222"/><path d="M5.800 4v1.500" stroke="#222" stroke-width=".5"/></svg>
<div style="left:552px;top:27px;width:1px;height:16.5px;background:linear-gradient(90deg,#b0b0b0 50%,#fafafa 50%)"></div>
<svg style="left:618px;top:31px;" width="6" height="8" viewBox="-0.5 -0.6 6 8" preserveAspectRatio="none"><path d="M3.400 0L.4 3.800h1.800L1.200 7l3.200-4.200H2.600z" fill="#1a1a1a"/></svg>
<div style="left:627px;top:29px;width:0.6px;height:12px;background:#c0c0c0"></div>
<svg style="left:629px;top:33px;" width="7" height="4" viewBox="-0.5 0 7 4" preserveAspectRatio="none"><path d="M0 1.200h2L1 2.600z" fill="#222"/><path d="M2.800 .5h3.600M2.800 2h3.600M2.800 3.500h3.600" stroke="#333" stroke-width=".8"/></svg>
<div style="left:0px;top:45.6px;width:640px;height:5px;background:linear-gradient(#b0b0b0,#989898 35%,#949494)"></div>
<svg style="left:2px;top:47px;" width="4" height="2" viewBox="-0.2 -0.6 4 2" preserveAspectRatio="none"><rect x="0" y="0" width="1.300" height="1.400" fill="#2a2a2a"/><rect x="2" y="0" width="1.300" height="1.400" fill="#2a2a2a"/></svg>
<svg style="left:28px;top:47px;" width="4" height="2" viewBox="-0.2 -0.6 4 2" preserveAspectRatio="none"><rect x="0" y="0" width="1.300" height="1.400" fill="#2a2a2a"/><rect x="2" y="0" width="1.300" height="1.400" fill="#2a2a2a"/></svg>
<svg style="left:559px;top:47px;" width="5" height="2" viewBox="-0.5 -0.6 5 2" preserveAspectRatio="none"><rect x="0" y="0" width="1.300" height="1.400" fill="#2a2a2a"/><rect x="2" y="0" width="1.300" height="1.400" fill="#2a2a2a"/></svg>
<svg style="left:633px;top:47px;" width="4" height="2" viewBox="0 -0.6 4 2" preserveAspectRatio="none"><rect x="0" y="0" width="1.300" height="1.400" fill="#2a2a2a"/><rect x="2" y="0" width="1.300" height="1.400" fill="#2a2a2a"/></svg>
<div style="left:0px;top:50.4px;width:24.8px;height:350px;background:#ededed;border-left:0.900px solid #8a8a8a;border-top:0.600px solid #fafafa"></div>
<div style="left:24.7px;top:50.4px;width:1.6px;height:350px;background:#666"></div>
<div style="left:26.3px;top:50.4px;width:16px;height:350px;background:#ededed;border-top:0.600px solid #fafafa"></div>
<div style="left:42.3px;top:50.4px;width:1.5px;height:350px;background:#666"></div>
<div style="left:8px;top:53.4px;width:9px;height:1.4px;background:#c4c4c4;border-radius:.5px"></div>
<div style="left:30.3px;top:53.4px;width:8.5px;height:1.4px;background:#c4c4c4;border-radius:.5px"></div>
<div style="left:1.8px;top:58.1px;width:10.4px;height:9.4px;background:linear-gradient(135deg,#5a5a5a,#8e8e8e 50%,#c8c8c8);border-radius:.6px"></div>
<svg style="left:5px;top:59px;" width="6" height="8" viewBox="-0.2 -0.7 6 8" preserveAspectRatio="none"><path d="M0 0V5.500L1.400 4.300 2.400 6.500 3.300 6.100 2.300 4H4.200Z" fill="#0a0a0a" stroke="#0a0a0a" stroke-width=".5" transform="translate(.3,.2)"/></svg>
<svg style="left:16px;top:59px;" width="6" height="8" viewBox="-0.1 -0.2 6 8" preserveAspectRatio="none"><path d="M0 0V5.500L1.400 4.300 2.400 6.500 3.300 6.100 2.300 4H4.200Z" fill="#fff" stroke="#222" stroke-width=".6" transform="translate(.4,.3)"/></svg>
<svg style="left:4px;top:68px;" width="7" height="8" viewBox="-0.6 -0.5 7 8" preserveAspectRatio="none"><path d="M.4 .4H3.400L5.200 2.200V6.400H.4Z" fill="#fdfdfd" stroke="#444" stroke-width=".6"/><path d="M3.400 .4V2.200H5.200" fill="none" stroke="#444" stroke-width=".5"/><path d="M4 4.600L6.200 6.800V4.900Z" fill="#111"/></svg>
<svg style="left:13px;top:69px;" width="11" height="6" viewBox="-0.5 0 11 6" preserveAspectRatio="none"><path d="M1 .2V5.800M9 .2V5.800" stroke="#333" stroke-width=".9"/><path d="M2.600 3H7.400" stroke="#333" stroke-width=".6"/><path d="M3.800 1.800L2.200 3 3.800 4.200ZM6.200 1.800L7.800 3 6.200 4.200Z" fill="#222"/></svg>
<svg style="left:3px;top:78px;" width="8" height="7" viewBox="-0.8 0 8 7" preserveAspectRatio="none"><path d="M.5 3.200V6.300H6.500V3.200" fill="none" stroke="#333" stroke-width=".9"/><path d="M.5 4.800H6.500" stroke="#555" stroke-width=".6"/><path d="M1.200 .3L3.600 3" stroke="#222" stroke-width=".9"/><path d="M4 3.400L1.900 3 3.700 1.400Z" fill="#222"/></svg>
<svg style="left:14px;top:78px;" width="8" height="7" viewBox="-0.4 0 8 7" preserveAspectRatio="none"><path d="M.5 3.200V6.300H6.500V3.200" fill="none" stroke="#333" stroke-width=".9"/><path d="M.5 4.800H6.500" stroke="#555" stroke-width=".6"/><path d="M3 3.600L6.200 .6" stroke="#222" stroke-width="1"/><path d="M6.800 0L6.600 2 4.900 .3Z" fill="#222"/></svg>
<div style="left:2px;top:87.3px;width:21.5px;height:1.2px;background:linear-gradient(#a6a6a6 50%,#fdfdfd 50%)"></div>
<div class="t" style="left:4px;top:89.500px;font-size:8px;font-weight:bold;font-family:'Liberation Serif',serif;color:#1a1a1a">T</div>
<svg style="left:10px;top:96px;" width="2" height="2" viewBox="0 -0.4 2 2" preserveAspectRatio="none"><path d="M0 1.600h1.800V0z" fill="#222"/></svg>
<svg style="left:14px;top:90px;" width="8" height="8" viewBox="-0.5 -0.5 8 8" preserveAspectRatio="none"><path d="M.5 6.300L6.500 .5" stroke="#333" stroke-width=".7"/></svg>
<svg style="left:3px;top:99px;" width="8" height="8" viewBox="-0.4 -0.3 8 8" preserveAspectRatio="none"><path d="M.5 6.600L1.300 3.900 4 1.300 6 3.200 3.300 5.900Z" fill="#fafafa" stroke="#333" stroke-width=".6"/><path d="M4 1.300L5.300 .2 7.100 2 6 3.200Z" fill="#222"/><path d="M.5 6.600L2.800 4.200" stroke="#333" stroke-width=".5"/></svg>
<svg style="left:10px;top:105px;" width="3" height="3" viewBox="-0.6 -0.6 3 3" preserveAspectRatio="none"><path d="M0 1.600h1.800V0z" fill="#222"/></svg>
<svg style="left:14px;top:99px;" width="8" height="8" viewBox="-0.6 -0.3 8 8" preserveAspectRatio="none"><path d="M.5 6.600L1.100 4.500 4.600 1 6.100 2.500 2.600 6Z" fill="#888" stroke="#333" stroke-width=".5"/><path d="M4.600 1L5.600 .1 7.100 1.600 6.100 2.500Z" fill="#1a1a1a"/><path d="M.5 6.600L1.100 4.500 2.600 6Z" fill="#eee" stroke="#333" stroke-width=".4"/></svg>
<svg style="left:21px;top:105px;" width="3" height="3" viewBox="-0.6 -0.6 3 3" preserveAspectRatio="none"><path d="M0 1.600h1.800V0z" fill="#222"/></svg>
<svg style="left:4px;top:110px;" width="6" height="6" viewBox="0 -0.4 6 6" preserveAspectRatio="none"><rect x=".4" y=".4" width="5.200" height="4.400" fill="#f4f4f4" stroke="#333" stroke-width=".7"/><path d="M.4 .4L5.600 4.800M5.600 .4L.4 4.800" stroke="#333" stroke-width=".55"/></svg>
<svg style="left:9px;top:115px;" width="3" height="2" viewBox="-0.8 0 3 2" preserveAspectRatio="none"><path d="M0 1.600h1.800V0z" fill="#222"/></svg>
<svg style="left:15px;top:110px;" width="6" height="6" viewBox="0 -0.4 6 6" preserveAspectRatio="none"><rect x=".4" y=".4" width="5.200" height="4.400" fill="#c8c8c8" stroke="#333" stroke-width=".7"/><rect x="1.300" y="1.300" width="3.400" height="2.600" fill="#a4a4a4"/></svg>
<svg style="left:20px;top:115px;" width="3" height="2" viewBox="-0.8 0 3 2" preserveAspectRatio="none"><path d="M0 1.600h1.800V0z" fill="#222"/></svg>
<svg style="left:3px;top:119px;" width="8" height="6" viewBox="-0.6 -0.4 8 6" preserveAspectRatio="none"><rect x=".4" y=".4" width="6.200" height="4.600" fill="#f4f4f4" stroke="#555" stroke-width=".6"/><path d="M.4 1.700H6.600M2.500 1.700V5M4.600 1.700V5" stroke="#555" stroke-width=".5"/><rect x=".4" y=".4" width="6.200" height="1.300" fill="#666"/></svg>
<svg style="left:14px;top:119px;" width="8" height="6" viewBox="-0.6 -0.4 8 6" preserveAspectRatio="none"><rect x=".4" y=".4" width="6.200" height="4.600" fill="#f4f4f4" stroke="#555" stroke-width=".6"/><path d="M.4 1.700H6.600M2.500 1.700V5M4.600 1.700V5" stroke="#555" stroke-width=".5"/><rect x=".4" y=".4" width="6.200" height="1.300" fill="#555"/><rect x="4.600" y="1.700" width="2" height="3.300" fill="#888"/></svg>
<div style="left:2px;top:127.2px;width:21.5px;height:1.2px;background:linear-gradient(#a6a6a6 50%,#fdfdfd 50%)"></div>
<svg style="left:3px;top:131px;" width="8" height="7" viewBox="-0.4 -0.2 8 7" preserveAspectRatio="none"><path d="M2.400 1.800L7.400 5.400M2.400 4.600L7.400 1" stroke="#333" stroke-width=".75"/><circle cx="1.500" cy="1.400" r="1" fill="none" stroke="#333" stroke-width=".65"/><circle cx="1.500" cy="5" r="1" fill="none" stroke="#333" stroke-width=".65"/></svg>
<svg style="left:14px;top:131px;" width="9" height="8" viewBox="-0.4 0 9 8" preserveAspectRatio="none"><rect x="1.800" y="1.600" width="5" height="4" fill="none" stroke="#333" stroke-width=".6" stroke-dasharray="1 .7"/><path d="M.2 .2L3 1.200 1.200 3Z" fill="#1a1a1a"/><path d="M6.200 7.400H8V5.600Z" fill="#222"/></svg>
<div style="left:3.600px;top:141.200px;width:7.200px;height:5.400px;background:linear-gradient(90deg,#111,#f4f4f4);border:0.600px solid #444"></div>
<div style="left:14.600px;top:141.200px;width:7.200px;height:5.400px;background:linear-gradient(#222,#555 40%,#f4f4f4);border:0.600px solid #444"></div>
<div style="left:2px;top:149.6px;width:21.5px;height:1.2px;background:linear-gradient(#a6a6a6 50%,#fdfdfd 50%)"></div>
<svg style="left:4px;top:153px;" width="7" height="8" viewBox="0 -0.653 7.6 8.706" preserveAspectRatio="none"><path d="M.4 .4h6.400v4.400L4.800 6.800H.4z" fill="#f4f4f4" stroke="#555" stroke-width=".7"/><path d="M1.600 2h4M1.600 3.500h3" stroke="#444" stroke-width=".5"/><path d="M6.800 4.800h-2v2" fill="none" stroke="#222" stroke-width=".5"/></svg>
<svg style="left:14px;top:152px;" width="8" height="8" viewBox="-0.889 -0.889 8.889 8.889" preserveAspectRatio="none"><path d="M.4 7.600l.6-1.800L5 1.800l1.200 1.200-4 4z" fill="#eee" stroke="#222" stroke-width=".6"/><path d="M4.400 1.200l2.400 2.400 1-1a1.200 1.200 0 0 0-2.400-2.400z" fill="#222"/></svg>
<svg style="left:21px;top:158px;" width="2" height="3" viewBox="0 -0.6 2 3" preserveAspectRatio="none"><path d="M0 1.600h1.800V0z" fill="#222"/></svg>
<svg style="left:3px;top:161px;" width="8" height="8" viewBox="-0.667 -0.681 8.889 9.081" preserveAspectRatio="none"><path d="M2 8c-.6-1.200-1.600-2.200-1.600-3.200 0-.5.700-.6 1.100 0l.5.700V1.600c0-.6.900-.6.900 0V4 .9c0-.6.900-.6.900 0V4 1.300c0-.6.900-.6.900 0v3V2.400c0-.6.900-.6.900 0v3.400c0 1-.5 1.500-.8 2.200z" fill="#fafafa" stroke="#444" stroke-width=".6"/></svg>
<svg style="left:14px;top:161px;" width="9" height="9" viewBox="-0.822 -0.843 9.243 9.486" preserveAspectRatio="none"><circle cx="3" cy="3" r="2.400" fill="#f4f4f4" stroke="#222" stroke-width=".8"/><path d="M4.800 4.800L7.200 7.400" stroke="#222" stroke-width="1.200"/></svg>
<div style="left:2px;top:172px;width:21.5px;height:1.2px;background:linear-gradient(#a6a6a6 50%,#fdfdfd 50%)"></div>
<svg style="left:9px;top:181px;" width="13" height="13" viewBox="-0.59 -0.59 12.78 12.78" preserveAspectRatio="none"><rect x=".5" y=".5" width="10.600" height="10.600" fill="#fff" stroke="#222" stroke-width=".8"/><rect x="3" y="3" width="5.600" height="5.600" fill="#ededed" stroke="#222" stroke-width=".7"/><path d="M.9 10.700L10.700 .9" stroke="#e0202a" stroke-width="1.300"/></svg>
<svg style="left:2px;top:174px;" width="14" height="14" viewBox="-0.8 -0.8 14 14" preserveAspectRatio="none"><rect x=".5" y=".5" width="11.600" height="11.600" fill="#fff" stroke="#222" stroke-width=".8"/><path d="M.9 11.700L11.700 .9" stroke="#e0202a" stroke-width="1.400"/></svg>
<svg style="left:17px;top:174px;" width="5" height="6" viewBox="-0.4 -0.8 5 6" preserveAspectRatio="none"><path d="M.6 1.400A3 3 0 0 1 3.400 3.800" stroke="#222" stroke-width=".6" fill="none"/><path d="M0 1.400L1.400 .2 1.500 2.400zM2.400 3.400l2-.2-1 1.400z" fill="#222"/></svg>
<svg style="left:3px;top:189px;" width="5" height="6" viewBox="0 -0.6 5 6" preserveAspectRatio="none"><rect x="1.600" y="1.600" width="2.800" height="2.800" fill="#111"/><rect x=".3" y=".3" width="2.800" height="2.800" fill="#fff" stroke="#111" stroke-width=".5"/></svg>
<svg style="left:5px;top:195px;" width="6" height="6" viewBox="0 -0.429 6.4 6.429" preserveAspectRatio="none"><rect x=".4" y=".4" width="5.600" height="5.200" fill="#999" stroke="#222" stroke-width=".7"/><rect x="1.800" y="1.800" width="2.800" height="2.400" fill="#eee"/></svg>
<div class="t" style="left:14.400px;top:195.200px;font-size:6.400px;font-family:'Liberation Serif',serif;color:#555">T</div>
<div style="left:3px;top:207px;width:5px;height:5px;background:#fff04a;border:0.600px solid #777"></div>
<div style="left:10px;top:207px;width:5px;height:5px;background:linear-gradient(90deg,#222,#fff);border:0.600px solid #444"></div>
<div style="left:16px;top:204.2px;width:7.6px;height:8.4px;background:linear-gradient(135deg,#5a5a5a,#b0b0b0);border-radius:.5px"></div>
<svg style="left:17px;top:205px;" width="6" height="7" viewBox="0 -0.6 6 7" preserveAspectRatio="none"><rect x=".3" y=".3" width="5" height="5" fill="#fff" stroke="#333" stroke-width=".5"/><path d="M.6 5L5 .6" stroke="#e0202a" stroke-width="1"/></svg>
<div style="left:1.6px;top:214.6px;width:11px;height:9px;background:linear-gradient(135deg,#5e5e5e,#b8b8b8);border-radius:.6px"></div>
<svg style="left:4px;top:216px;" width="7" height="6" viewBox="0 0 7 6" preserveAspectRatio="none"><rect x=".4" y=".4" width="5.600" height="5.200" fill="#ccc" stroke="#222" stroke-width=".7"/><rect x="1.400" y="1.400" width="3.600" height="3.200" fill="#888"/></svg>
<svg style="left:15px;top:216px;" width="7" height="6" viewBox="0 0 7 6" preserveAspectRatio="none"><rect x=".4" y=".4" width="5.600" height="5.200" rx=".8" fill="#aaa" stroke="#444" stroke-width=".7"/><rect x="1.400" y="1.400" width="3.600" height="3.200" fill="#777"/></svg>
<svg style="left:21px;top:221px;" width="3" height="3" viewBox="-0.6 -0.6 3 3" preserveAspectRatio="none"><path d="M0 1.600h1.800V0z" fill="#222"/></svg>
<svg style="left:30px;top:57px;" width="9" height="10" viewBox="-0.4 -0.7 9 10" preserveAspectRatio="none"><defs><radialGradient id="gi" cx=".4" cy=".3" r=".8"><stop offset="0" stop-color="#888"/><stop offset=".5" stop-color="#222"/><stop offset="1" stop-color="#000"/></radialGradient></defs><circle cx="4.300" cy="4.300" r="4.100" fill="url(#gi)"/><rect x="3.600" y="3.400" width="1.500" height="3.400" fill="#fff"/><circle cx="4.300" cy="2.200" r=".9" fill="#fff"/></svg>
<div style="left:26.3px;top:69.2px;width:16.2px;height:1.2px;background:linear-gradient(#a6a6a6 50%,#fdfdfd 50%)"></div>
<div style="left:30.3px;top:72.2px;width:8.5px;height:1.4px;background:#c4c4c4;border-radius:.5px"></div>
<svg style="left:30px;top:75px;" width="10" height="11" viewBox="-0.3 -0.5 10 11" preserveAspectRatio="none"><path d="M7.600 1C6.200 .3 5.300 1 5 2.600L4 7C3.700 8.500 2.800 9 1.600 8.400" stroke="#3a3a3a" stroke-width="1.250" fill="none"/><path d="M3 3.800H7.200" stroke="#3a3a3a" stroke-width=".8"/><rect x=".4" y="5.600" width="3" height="2.600" fill="#6a6a6a" stroke="#444" stroke-width=".4"/></svg>
<div style="left:26.3px;top:87.3px;width:16.2px;height:1.2px;background:linear-gradient(#a6a6a6 50%,#fdfdfd 50%)"></div>
<div style="left:30.3px;top:90.3px;width:8.5px;height:1.4px;background:#c4c4c4;border-radius:.5px"></div>
<svg style="left:30px;top:93px;" width="10" height="11" viewBox="-0.3 -0.8 10 11" preserveAspectRatio="none"><path d="M7.400 1.400C6 .2 3.800 .8 3.900 2.600 4 4.200 6.600 4.200 6.400 6.200 6.200 8 3.800 8.600 2.400 7.400" stroke="#3a3a3a" stroke-width="1.250" fill="none"/><path d="M3.400 4.600H7.400" stroke="#3a3a3a" stroke-width=".7"/><rect x=".4" y="5.600" width="3" height="2.600" fill="#6a6a6a" stroke="#444" stroke-width=".4"/></svg>
<div style="left:26.3px;top:105.6px;width:16.2px;height:1.2px;background:linear-gradient(#a6a6a6 50%,#fdfdfd 50%)"></div>
<div style="left:30.3px;top:108.6px;width:8.5px;height:1.4px;background:#c4c4c4;border-radius:.5px"></div>
<svg style="left:30px;top:113px;" width="9" height="8" viewBox="-0.7 0 9 8" preserveAspectRatio="none"><rect x=".4" y="2" width="5.600" height="5.600" fill="#f4f4f4" stroke="#333" stroke-width=".6" stroke-dasharray="1 .6"/><path d="M2.400 .4h5.200v5.200" fill="none" stroke="#333" stroke-width=".7"/><rect x="1.800" y="3.400" width="2.800" height="2.800" fill="#444"/></svg>
<div style="left:26.3px;top:124.2px;width:16.2px;height:1.2px;background:linear-gradient(#a6a6a6 50%,#fdfdfd 50%)"></div>
<div style="left:30.3px;top:127.2px;width:8.5px;height:1.4px;background:#c4c4c4;border-radius:.5px"></div>
<svg style="left:30px;top:131px;" width="9" height="8" viewBox="-0.7 -0.3 9 8" preserveAspectRatio="none"><rect x=".4" y=".4" width="7.200" height="6.200" fill="#333" stroke="#222" stroke-width=".6"/><rect x="1.600" y="1.600" width="2.200" height="3.800" fill="#bbb"/><rect x="4.400" y="1.600" width="2" height="3.800" fill="#888"/></svg>
<div style="left:26.3px;top:142.4px;width:16.2px;height:1.2px;background:linear-gradient(#a6a6a6 50%,#fdfdfd 50%)"></div>
<div style="left:30.3px;top:145.4px;width:8.5px;height:1.4px;background:#c4c4c4;border-radius:.5px"></div>
<svg style="left:30px;top:149px;" width="9" height="8" viewBox="-0.4 -0.4 9 8" preserveAspectRatio="none"><ellipse cx="4.300" cy="4" rx="4" ry="3.200" fill="#444"/><circle cx="2.600" cy="3" r=".8" fill="#eee"/><circle cx="4.600" cy="2.200" r=".8" fill="#eee"/><circle cx="6.400" cy="3.400" r=".8" fill="#eee"/><ellipse cx="4.800" cy="5.400" rx="1.200" ry=".8" fill="#ededed"/></svg>
<div style="left:26.3px;top:160.2px;width:16.2px;height:1.2px;background:linear-gradient(#a6a6a6 50%,#fdfdfd 50%)"></div>
<div style="left:30.3px;top:163.2px;width:8.5px;height:1.4px;background:#c4c4c4;border-radius:.5px"></div>
<div style="left:30.900000000000002px;top:167.800px;width:7.600px;height:6px;background:linear-gradient(90deg,#fff,#222);border:0.600px solid #555"></div>
<div style="left:26.3px;top:178.4px;width:16.2px;height:1.2px;background:linear-gradient(#a6a6a6 50%,#fdfdfd 50%)"></div>
<div style="left:30.3px;top:181.4px;width:8.5px;height:1.4px;background:#c4c4c4;border-radius:.5px"></div>
<svg style="left:30px;top:184px;" width="10" height="10" viewBox="-0.3 -0.2 10 10" preserveAspectRatio="none"><path d="M7.600 1C6.200 .3 5.300 1 5 2.600L4 7C3.700 8.500 2.800 9 1.600 8.400" stroke="#3a3a3a" stroke-width="1.250" fill="none"/><path d="M3 3.800H7.200" stroke="#3a3a3a" stroke-width=".8"/><rect x=".4" y="5.600" width="3" height="2.600" fill="#6a6a6a" stroke="#444" stroke-width=".4"/></svg>
<svg style="left:30px;top:197px;" width="9" height="8" viewBox="-0.7 0 9 8" preserveAspectRatio="none"><path d="M5.800 .8C4.400 .2 2.800.6 2.800 1.800 2.800 3 4.800 2.600 4.800 3.800S2.800 5.200 1.400 4.600" stroke="#333" stroke-width="1.200" fill="none"/><rect x="1" y="4.600" width="6" height="3" fill="#444"/><rect x="4" y="3.600" width="3" height="2" fill="#777"/></svg>
<svg style="left:30px;top:210px;" width="9" height="8" viewBox="-0.7 0 9 8" preserveAspectRatio="none"><path d="M3.400 .6C2 .2 .8 1 .8 2.200c0 1.400 2 1 2 2.200" stroke="#333" stroke-width="1.100" fill="none"/><circle cx="5" cy="5" r="2.400" fill="#222"/><path d="M5 3.600v2.800M3.600 5h2.800" stroke="#eee" stroke-width=".7"/></svg>
<div style="left:26.3px;top:221.3px;width:16.2px;height:1.2px;background:linear-gradient(#a6a6a6 50%,#fdfdfd 50%)"></div>
<div style="left:30.3px;top:224.3px;width:8.5px;height:1.4px;background:#c4c4c4;border-radius:.5px"></div>
<svg style="left:30px;top:228px;" width="9" height="9" viewBox="-0.7 -0.5 9 9" preserveAspectRatio="none"><rect x="1.400" y="1.400" width="5.200" height="5.200" fill="#f8f8f8" stroke="#333" stroke-width=".6" stroke-dasharray="1.200 .7"/><rect x=".4" y=".4" width="1.800" height="1.800" fill="#222"/><rect x="5.800" y=".4" width="1.800" height="1.800" fill="#222"/><rect x=".4" y="5.800" width="1.800" height="1.800" fill="#222"/><rect x="5.800" y="5.800" width="1.800" height="1.800" fill="#222"/></svg>
<div style="left:26.3px;top:241.5px;width:16px;height:1.2px;background:linear-gradient(#a6a6a6 50%,#fdfdfd 50%)"></div>
<div style="left:43.8px;top:46px;width:501.7px;height:8.1px;background:linear-gradient(#a2a2a2,#b3b3b3 20%,#b5b5b5)"></div>
<div style="left:43.8px;top:47.1px;width:65.4px;height:7px;background:linear-gradient(#f2f2f2,#e6e6e6);border-right:0.700px solid #7a7a7a;border-top:0.500px solid #fafafa"></div>
<svg style="left:48px;top:49px;" width="3" height="3" viewBox="0 -0.2 3 3" preserveAspectRatio="none"><path d="M.2 .2l2.200 2.200M2.400 .2L.2 2.400" stroke="#222" stroke-width=".6"/></svg>
<div class="t" style="left:54px;top:47.1px;font-size:5.8px;color:#222;font-weight:normal;transform:scaleX(0.873);transform-origin:0 0;">*名称未設定-1 @ 260%</div>
<div style="left:43.8px;top:54.1px;width:495.4px;height:8px;background:#fdfdfd"></div>
<div style="left:43.8px;top:53.8px;width:7.4px;height:346px;background:#fdfdfd"></div>
<svg style="left:43px;top:53px;" width="9" height="9" viewBox="-0.8 -0.8 9 9" preserveAspectRatio="none"><rect width="7.400" height="8" fill="#f6f6f6"/><path d="M3.400 0v8M0 4h7.400" stroke="#666" stroke-width=".5" stroke-dasharray=".8 .6"/><path d="M7.100 0v8M0 7.700h7.400" stroke="#555" stroke-width=".5" stroke-dasharray=".8 .6"/></svg>
<svg style="left:43px;top:54px;" width="497" height="9" viewBox="-0.8 -0.1 497 9" preserveAspectRatio="none"><path d="M9.95 0v8" stroke="#666" stroke-width=".7"/><path d="M12.47 7.1v0.9" stroke="#1a1a1a" stroke-width=".9"/><path d="M14.99 6.5v1.5" stroke="#1a1a1a" stroke-width=".9"/><path d="M17.51 7.1v0.9" stroke="#1a1a1a" stroke-width=".9"/><path d="M20.03 6.5v1.5" stroke="#1a1a1a" stroke-width=".9"/><path d="M22.56 7.1v0.9" stroke="#1a1a1a" stroke-width=".9"/><path d="M25.08 6.5v1.5" stroke="#1a1a1a" stroke-width=".9"/><path d="M27.60 7.1v0.9" stroke="#1a1a1a" stroke-width=".9"/><path d="M30.12 6.5v1.5" stroke="#1a1a1a" stroke-width=".9"/><path d="M32.64 7.1v0.9" stroke="#1a1a1a" stroke-width=".9"/><text x="10.95" y="4.600" font-size="4.300" fill="#333" font-family="Liberation Sans,sans-serif">100</text><path d="M35.16 0v8" stroke="#666" stroke-width=".7"/><path d="M37.68 7.1v0.9" stroke="#1a1a1a" stroke-width=".9"/><path d="M40.20 6.5v1.5" stroke="#1a1a1a" stroke-width=".9"/><path d="M42.72 7.1v0.9" stroke="#1a1a1a" stroke-width=".9"/><path d="M45.24 6.5v1.5" stroke="#1a1a1a" stroke-width=".9"/><path d="M47.77 7.1v0.9" stroke="#1a1a1a" stroke-width=".9"/><path d="M50.29 6.5v1.5" stroke="#1a1a1a" stroke-width=".9"/><path d="M52.81 7.1v0.9" stroke="#1a1a1a" stroke-width=".9"/><path d="M55.33 6.5v1.5" stroke="#1a1a1a" stroke-width=".9"/><path d="M57.85 7.1v0.9" stroke="#1a1a1a" stroke-width=".9"/><text x="36.16" y="4.600" font-size="4.300" fill="#333" font-family="Liberation Sans,sans-serif">105</text><path d="M60.37 0v8" stroke="#666" stroke-width=".7"/><path d="M62.89 7.1v0.9" stroke="#1a1a1a" stroke-width=".9"/><path d="M65.41 6.5v1.5" stroke="#1a1a1a" stroke-width=".9"/><path d="M67.93 7.1v0.9" stroke="#1a1a1a" stroke-width=".9"/><path d="M70.45 6.5v1.5" stroke="#1a1a1a" stroke-width=".9"/><path d="M72.98 7.1v0.9" stroke="#1a1a1a" stroke-width=".9"/><path d="M75.50 6.5v1.5" stroke="#1a1a1a" stroke-width=".9"/><path d="M78.02 7.1v0.9" stroke="#1a1a1a" stroke-width=".9"/><path d="M80.54 6.5v1.5" stroke="#1a1a1a" stroke-width=".9"/><path d="M83.06 7.1v0.9" stroke="#1a1a1a" stroke-width=".9"/><text x="61.37" y="4.600" font-size="4.300" fill="#333" font-family="Liberation Sans,sans-serif">110</text><path d="M85.58 0v8" stroke="#666" stroke-width=".7"/><path d="M88.10 7.1v0.9" stroke="#1a1a1a" stroke-width=".9"/><path d="M90.62 6.5v1.5" stroke="#1a1a1a" stroke-width=".9"/><path d="M93.14 7.1v0.9" stroke="#1a1a1a" stroke-width=".9"/><path d="M95.66 6.5v1.5" stroke="#1a1a1a" stroke-width=".9"/><path d="M98.19 7.1v0.9" stroke="#1a1a1a" stroke-width=".9"/><path d="M100.71 6.5v1.5" stroke="#1a1a1a" stroke-width=".9"/><path d="M103.23 7.1v0.9" stroke="#1a1a1a" stroke-width=".9"/><path d="M105.75 6.5v1.5" stroke="#1a1a1a" stroke-width=".9"/><path d="M108.27 7.1v0.9" stroke="#1a1a1a" stroke-width=".9"/><text x="86.58" y="4.600" font-size="4.300" fill="#333" font-family="Liberation Sans,sans-serif">115</text><path d="M110.79 0v8" stroke="#666" stroke-width=".7"/><path d="M113.31 7.1v0.9" stroke="#1a1a1a" stroke-width=".9"/><path d="M115.83 6.5v1.5" stroke="#1a1a1a" stroke-width=".9"/><path d="M118.35 7.1v0.9" stroke="#1a1a1a" stroke-width=".9"/><path d="M120.87 6.5v1.5" stroke="#1a1a1a" stroke-width=".9"/><path d="M123.40 7.1v0.9" stroke="#1a1a1a" stroke-width=".9"/><path d="M125.92 6.5v1.5" stroke="#1a1a1a" stroke-width=".9"/><path d="M128.44 7.1v0.9" stroke="#1a1a1a" stroke-width=".9"/><path d="M130.96 6.5v1.5" stroke="#1a1a1a" stroke-width=".9"/><path d="M133.48 7.1v0.9" stroke="#1a1a1a" stroke-width=".9"/><text x="111.79" y="4.600" font-size="4.300" fill="#333" font-family="Liberation Sans,sans-serif">120</text><path d="M136.00 0v8" stroke="#666" stroke-width=".7"/><path d="M138.52 7.1v0.9" stroke="#1a1a1a" stroke-width=".9"/><path d="M141.04 6.5v1.5" stroke="#1a1a1a" stroke-width=".9"/><path d="M143.56 7.1v0.9" stroke="#1a1a1a" stroke-width=".9"/><path d="M146.08 6.5v1.5" stroke="#1a1a1a" stroke-width=".9"/><path d="M148.61 7.1v0.9" stroke="#1a1a1a" stroke-width=".9"/><path d="M151.13 6.5v1.5" stroke="#1a1a1a" stroke-width=".9"/><path d="M153.65 7.1v0.9" stroke="#1a1a1a" stroke-width=".9"/><path d="M156.17 6.5v1.5" stroke="#1a1a1a" stroke-width=".9"/><path d="M158.69 7.1v0.9" stroke="#1a1a1a" stroke-width=".9"/><text x="137.00" y="4.600" font-size="4.300" fill="#333" font-family="Liberation Sans,sans-serif">125</text><path d="M161.21 0v8" stroke="#666" stroke-width=".7"/><path d="M163.73 7.1v0.9" stroke="#1a1a1a" stroke-width=".9"/><path d="M166.25 6.5v1.5" stroke="#1a1a1a" stroke-width=".9"/><path d="M168.77 7.1v0.9" stroke="#1a1a1a" stroke-width=".9"/><path d="M171.29 6.5v1.5" stroke="#1a1a1a" stroke-width=".9"/><path d="M173.82 7.1v0.9" stroke="#1a1a1a" stroke-width=".9"/><path d="M176.34 6.5v1.5" stroke="#1a1a1a" stroke-width=".9"/><path d="M178.86 7.1v0.9" stroke="#1a1a1a" stroke-width=".9"/><path d="M181.38 6.5v1.5" stroke="#1a1a1a" stroke-width=".9"/><path d="M183.90 7.1v0.9" stroke="#1a1a1a" stroke-width=".9"/><text x="162.21" y="4.600" font-size="4.300" fill="#333" font-family="Liberation Sans,sans-serif">130</text><path d="M186.42 0v8" stroke="#666" stroke-width=".7"/><path d="M188.94 7.1v0.9" stroke="#1a1a1a" stroke-width=".9"/><path d="M191.46 6.5v1.5" stroke="#1a1a1a" stroke-width=".9"/><path d="M193.98 7.1v0.9" stroke="#1a1a1a" stroke-width=".9"/><path d="M196.50 6.5v1.5" stroke="#1a1a1a" stroke-width=".9"/><path d="M199.03 7.1v0.9" stroke="#1a1a1a" stroke-width=".9"/><path d="M201.55 6.5v1.5" stroke="#1a1a1a" stroke-width=".9"/><path d="M204.07 7.1v0.9" stroke="#1a1a1a" stroke-width=".9"/><path d="M206.59 6.5v1.5" stroke="#1a1a1a" stroke-width=".9"/><path d="M209.11 7.1v0.9" stroke="#1a1a1a" stroke-width=".9"/><text x="187.42" y="4.600" font-size="4.300" fill="#333" font-family="Liberation Sans,sans-serif">135</text><path d="M211.63 0v8" stroke="#666" stroke-width=".7"/><path d="M214.15 7.1v0.9" stroke="#1a1a1a" stroke-width=".9"/><path d="M216.67 6.5v1.5" stroke="#1a1a1a" stroke-width=".9"/><path d="M219.19 7.1v0.9" stroke="#1a1a1a" stroke-width=".9"/><path d="M221.71 6.5v1.5" stroke="#1a1a1a" stroke-width=".9"/><path d="M224.24 7.1v0.9" stroke="#1a1a1a" stroke-width=".9"/><path d="M226.76 6.5v1.5" stroke="#1a1a1a" stroke-width=".9"/><path d="M229.28 7.1v0.9" stroke="#1a1a1a" stroke-width=".9"/><path d="M231.80 6.5v1.5" stroke="#1a1a1a" stroke-width=".9"/><path d="M234.32 7.1v0.9" stroke="#1a1a1a" stroke-width=".9"/><text x="212.63" y="4.600" font-size="4.300" fill="#333" font-family="Liberation Sans,sans-serif">140</text><path d="M236.84 0v8" stroke="#666" stroke-width=".7"/><path d="M239.36 7.1v0.9" stroke="#1a1a1a" stroke-width=".9"/><path d="M241.88 6.5v1.5" stroke="#1a1a1a" stroke-width=".9"/><path d="M244.40 7.1v0.9" stroke="#1a1a1a" stroke-width=".9"/><path d="M246.92 6.5v1.5" stroke="#1a1a1a" stroke-width=".9"/><path d="M249.45 7.1v0.9" stroke="#1a1a1a" stroke-width=".9"/><path d="M251.97 6.5v1.5" stroke="#1a1a1a" stroke-width=".9"/><path d="M254.49 7.1v0.9" stroke="#1a1a1a" stroke-width=".9"/><path d="M257.01 6.5v1.5" stroke="#1a1a1a" stroke-width=".9"/><path d="M259.53 7.1v0.9" stroke="#1a1a1a" stroke-width=".9"/><text x="237.84" y="4.600" font-size="4.300" fill="#333" font-family="Liberation Sans,sans-serif">145</text><path d="M262.05 0v8" stroke="#666" stroke-width=".7"/><path d="M264.57 7.1v0.9" stroke="#1a1a1a" stroke-width=".9"/><path d="M267.09 6.5v1.5" stroke="#1a1a1a" stroke-width=".9"/><path d="M269.61 7.1v0.9" stroke="#1a1a1a" stroke-width=".9"/><path d="M272.13 6.5v1.5" stroke="#1a1a1a" stroke-width=".9"/><path d="M274.66 7.1v0.9" stroke="#1a1a1a" stroke-width=".9"/><path d="M277.18 6.5v1.5" stroke="#1a1a1a" stroke-width=".9"/><path d="M279.70 7.1v0.9" stroke="#1a1a1a" stroke-width=".9"/><path d="M282.22 6.5v1.5" stroke="#1a1a1a" stroke-width=".9"/><path d="M284.74 7.1v0.9" stroke="#1a1a1a" stroke-width=".9"/><text x="263.05" y="4.600" font-size="4.300" fill="#333" font-family="Liberation Sans,sans-serif">150</text><path d="M287.26 0v8" stroke="#666" stroke-width=".7"/><path d="M289.78 7.1v0.9" stroke="#1a1a1a" stroke-width=".9"/><path d="M292.30 6.5v1.5" stroke="#1a1a1a" stroke-width=".9"/><path d="M294.82 7.1v0.9" stroke="#1a1a1a" stroke-width=".9"/><path d="M297.34 6.5v1.5" stroke="#1a1a1a" stroke-width=".9"/><path d="M299.87 7.1v0.9" stroke="#1a1a1a" stroke-width=".9"/><path d="M302.39 6.5v1.5" stroke="#1a1a1a" stroke-width=".9"/><path d="M304.91 7.1v0.9" stroke="#1a1a1a" stroke-width=".9"/><path d="M307.43 6.5v1.5" stroke="#1a1a1a" stroke-width=".9"/><path d="M309.95 7.1v0.9" stroke="#1a1a1a" stroke-width=".9"/><text x="288.26" y="4.600" font-size="4.300" fill="#333" font-family="Liberation Sans,sans-serif">155</text><path d="M312.47 0v8" stroke="#666" stroke-width=".7"/><path d="M314.99 7.1v0.9" stroke="#1a1a1a" stroke-width=".9"/><path d="M317.51 6.5v1.5" stroke="#1a1a1a" stroke-width=".9"/><path d="M320.03 7.1v0.9" stroke="#1a1a1a" stroke-width=".9"/><path d="M322.55 6.5v1.5" stroke="#1a1a1a" stroke-width=".9"/><path d="M325.07 7.1v0.9" stroke="#1a1a1a" stroke-width=".9"/><path d="M327.60 6.5v1.5" stroke="#1a1a1a" stroke-width=".9"/><path d="M330.12 7.1v0.9" stroke="#1a1a1a" stroke-width=".9"/><path d="M332.64 6.5v1.5" stroke="#1a1a1a" stroke-width=".9"/><path d="M335.16 7.1v0.9" stroke="#1a1a1a" stroke-width=".9"/><text x="313.47" y="4.600" font-size="4.300" fill="#333" font-family="Liberation Sans,sans-serif">160</text><path d="M337.68 0v8" stroke="#666" stroke-width=".7"/><path d="M340.20 7.1v0.9" stroke="#1a1a1a" stroke-width=".9"/><path d="M342.72 6.5v1.5" stroke="#1a1a1a" stroke-width=".9"/><path d="M345.24 7.1v0.9" stroke="#1a1a1a" stroke-width=".9"/><path d="M347.76 6.5v1.5" stroke="#1a1a1a" stroke-width=".9"/><path d="M350.28 7.1v0.9" stroke="#1a1a1a" stroke-width=".9"/><path d="M352.81 6.5v1.5" stroke="#1a1a1a" stroke-width=".9"/><path d="M355.33 7.1v0.9" stroke="#1a1a1a" stroke-width=".9"/><path d="M357.85 6.5v1.5" stroke="#1a1a1a" stroke-width=".9"/><path d="M360.37 7.1v0.9" stroke="#1a1a1a" stroke-width=".9"/><text x="338.68" y="4.600" font-size="4.300" fill="#333" font-family="Liberation Sans,sans-serif">165</text><path d="M362.89 0v8" stroke="#666" stroke-width=".7"/><path d="M365.41 7.1v0.9" stroke="#1a1a1a" stroke-width=".9"/><path d="M367.93 6.5v1.5" stroke="#1a1a1a" stroke-width=".9"/><path d="M370.45 7.1v0.9" stroke="#1a1a1a" stroke-width=".9"/><path d="M372.97 6.5v1.5" stroke="#1a1a1a" stroke-width=".9"/><path d="M375.49 7.1v0.9" stroke="#1a1a1a" stroke-width=".9"/><path d="M378.02 6.5v1.5" stroke="#1a1a1a" stroke-width=".9"/><path d="M380.54 7.1v0.9" stroke="#1a1a1a" stroke-width=".9"/><path d="M383.06 6.5v1.5" stroke="#1a1a1a" stroke-width=".9"/><path d="M385.58 7.1v0.9" stroke="#1a1a1a" stroke-width=".9"/><text x="363.89" y="4.600" font-size="4.300" fill="#333" font-family="Liberation Sans,sans-serif">170</text><path d="M388.10 0v8" stroke="#666" stroke-width=".7"/><path d="M390.62 7.1v0.9" stroke="#1a1a1a" stroke-width=".9"/><path d="M393.14 6.5v1.5" stroke="#1a1a1a" stroke-width=".9"/><path d="M395.66 7.1v0.9" stroke="#1a1a1a" stroke-width=".9"/><path d="M398.18 6.5v1.5" stroke="#1a1a1a" stroke-width=".9"/><path d="M400.70 7.1v0.9" stroke="#1a1a1a" stroke-width=".9"/><path d="M403.23 6.5v1.5" stroke="#1a1a1a" stroke-width=".9"/><path d="M405.75 7.1v0.9" stroke="#1a1a1a" stroke-width=".9"/><path d="M408.27 6.5v1.5" stroke="#1a1a1a" stroke-width=".9"/><path d="M410.79 7.1v0.9" stroke="#1a1a1a" stroke-width=".9"/><text x="389.10" y="4.600" font-size="4.300" fill="#333" font-family="Liberation Sans,sans-serif">175</text><path d="M413.31 0v8" stroke="#666" stroke-width=".7"/><path d="M415.83 7.1v0.9" stroke="#1a1a1a" stroke-width=".9"/><path d="M418.35 6.5v1.5" stroke="#1a1a1a" stroke-width=".9"/><path d="M420.87 7.1v0.9" stroke="#1a1a1a" stroke-width=".9"/><path d="M423.39 6.5v1.5" stroke="#1a1a1a" stroke-width=".9"/><path d="M425.91 7.1v0.9" stroke="#1a1a1a" stroke-width=".9"/><path d="M428.44 6.5v1.5" stroke="#1a1a1a" stroke-width=".9"/><path d="M430.96 7.1v0.9" stroke="#1a1a1a" stroke-width=".9"/><path d="M433.48 6.5v1.5" stroke="#1a1a1a" stroke-width=".9"/><path d="M436.00 7.1v0.9" stroke="#1a1a1a" stroke-width=".9"/><text x="414.31" y="4.600" font-size="4.300" fill="#333" font-family="Liberation Sans,sans-serif">180</text><path d="M438.52 0v8" stroke="#666" stroke-width=".7"/><path d="M441.04 7.1v0.9" stroke="#1a1a1a" stroke-width=".9"/><path d="M443.56 6.5v1.5" stroke="#1a1a1a" stroke-width=".9"/><path d="M446.08 7.1v0.9" stroke="#1a1a1a" stroke-width=".9"/><path d="M448.60 6.5v1.5" stroke="#1a1a1a" stroke-width=".9"/><path d="M451.12 7.1v0.9" stroke="#1a1a1a" stroke-width=".9"/><path d="M453.65 6.5v1.5" stroke="#1a1a1a" stroke-width=".9"/><path d="M456.17 7.1v0.9" stroke="#1a1a1a" stroke-width=".9"/><path d="M458.69 6.5v1.5" stroke="#1a1a1a" stroke-width=".9"/><path d="M461.21 7.1v0.9" stroke="#1a1a1a" stroke-width=".9"/><text x="439.52" y="4.600" font-size="4.300" fill="#333" font-family="Liberation Sans,sans-serif">185</text><path d="M463.73 0v8" stroke="#666" stroke-width=".7"/><path d="M466.25 7.1v0.9" stroke="#1a1a1a" stroke-width=".9"/><path d="M468.77 6.5v1.5" stroke="#1a1a1a" stroke-width=".9"/><path d="M471.29 7.1v0.9" stroke="#1a1a1a" stroke-width=".9"/><path d="M473.81 6.5v1.5" stroke="#1a1a1a" stroke-width=".9"/><path d="M476.33 7.1v0.9" stroke="#1a1a1a" stroke-width=".9"/><path d="M478.86 6.5v1.5" stroke="#1a1a1a" stroke-width=".9"/><path d="M481.38 7.1v0.9" stroke="#1a1a1a" stroke-width=".9"/><path d="M483.90 6.5v1.5" stroke="#1a1a1a" stroke-width=".9"/><path d="M486.42 7.1v0.9" stroke="#1a1a1a" stroke-width=".9"/><text x="464.73" y="4.600" font-size="4.300" fill="#333" font-family="Liberation Sans,sans-serif">190</text><path d="M488.94 0v8" stroke="#666" stroke-width=".7"/><path d="M491.46 7.1v0.9" stroke="#1a1a1a" stroke-width=".9"/><path d="M493.98 6.5v1.5" stroke="#1a1a1a" stroke-width=".9"/><text x="489.94" y="4.600" font-size="4.300" fill="#333" font-family="Liberation Sans,sans-serif">19</text></svg>
<svg style="left:43px;top:53px;" width="9" height="340" viewBox="-0.8 -0.8 9 340" preserveAspectRatio="none"><path d="M5.9 8.69h1.5" stroke="#1a1a1a" stroke-width=".9"/><path d="M6.5 11.22h0.9" stroke="#1a1a1a" stroke-width=".9"/><path d="M5.9 13.74h1.5" stroke="#1a1a1a" stroke-width=".9"/><path d="M6.5 16.27h0.9" stroke="#1a1a1a" stroke-width=".9"/><text transform="translate(4.600,3.02) rotate(-90)" font-size="4.300" fill="#333" font-family="Liberation Sans,sans-serif">100</text><path d="M0 18.80h7.400" stroke="#666" stroke-width=".7"/><path d="M6.5 21.33h0.9" stroke="#1a1a1a" stroke-width=".9"/><path d="M5.9 23.86h1.5" stroke="#1a1a1a" stroke-width=".9"/><path d="M6.5 26.38h0.9" stroke="#1a1a1a" stroke-width=".9"/><path d="M5.9 28.91h1.5" stroke="#1a1a1a" stroke-width=".9"/><path d="M6.5 31.44h0.9" stroke="#1a1a1a" stroke-width=".9"/><path d="M5.9 33.97h1.5" stroke="#1a1a1a" stroke-width=".9"/><path d="M6.5 36.50h0.9" stroke="#1a1a1a" stroke-width=".9"/><path d="M5.9 39.02h1.5" stroke="#1a1a1a" stroke-width=".9"/><path d="M6.5 41.55h0.9" stroke="#1a1a1a" stroke-width=".9"/><text transform="translate(4.600,28.30) rotate(-90)" font-size="4.300" fill="#333" font-family="Liberation Sans,sans-serif">105</text><path d="M0 44.08h7.400" stroke="#666" stroke-width=".7"/><path d="M6.5 46.61h0.9" stroke="#1a1a1a" stroke-width=".9"/><path d="M5.9 49.14h1.5" stroke="#1a1a1a" stroke-width=".9"/><path d="M6.5 51.66h0.9" stroke="#1a1a1a" stroke-width=".9"/><path d="M5.9 54.19h1.5" stroke="#1a1a1a" stroke-width=".9"/><path d="M6.5 56.72h0.9" stroke="#1a1a1a" stroke-width=".9"/><path d="M5.9 59.25h1.5" stroke="#1a1a1a" stroke-width=".9"/><path d="M6.5 61.78h0.9" stroke="#1a1a1a" stroke-width=".9"/><path d="M5.9 64.30h1.5" stroke="#1a1a1a" stroke-width=".9"/><path d="M6.5 66.83h0.9" stroke="#1a1a1a" stroke-width=".9"/><text transform="translate(4.600,53.58) rotate(-90)" font-size="4.300" fill="#333" font-family="Liberation Sans,sans-serif">110</text><path d="M0 69.36h7.400" stroke="#666" stroke-width=".7"/><path d="M6.5 71.89h0.9" stroke="#1a1a1a" stroke-width=".9"/><path d="M5.9 74.42h1.5" stroke="#1a1a1a" stroke-width=".9"/><path d="M6.5 76.94h0.9" stroke="#1a1a1a" stroke-width=".9"/><path d="M5.9 79.47h1.5" stroke="#1a1a1a" stroke-width=".9"/><path d="M6.5 82.00h0.9" stroke="#1a1a1a" stroke-width=".9"/><path d="M5.9 84.53h1.5" stroke="#1a1a1a" stroke-width=".9"/><path d="M6.5 87.06h0.9" stroke="#1a1a1a" stroke-width=".9"/><path d="M5.9 89.58h1.5" stroke="#1a1a1a" stroke-width=".9"/><path d="M6.5 92.11h0.9" stroke="#1a1a1a" stroke-width=".9"/><text transform="translate(4.600,78.86) rotate(-90)" font-size="4.300" fill="#333" font-family="Liberation Sans,sans-serif">115</text><path d="M0 94.64h7.400" stroke="#666" stroke-width=".7"/><path d="M6.5 97.17h0.9" stroke="#1a1a1a" stroke-width=".9"/><path d="M5.9 99.70h1.5" stroke="#1a1a1a" stroke-width=".9"/><path d="M6.5 102.22h0.9" stroke="#1a1a1a" stroke-width=".9"/><path d="M5.9 104.75h1.5" stroke="#1a1a1a" stroke-width=".9"/><path d="M6.5 107.28h0.9" stroke="#1a1a1a" stroke-width=".9"/><path d="M5.9 109.81h1.5" stroke="#1a1a1a" stroke-width=".9"/><path d="M6.5 112.34h0.9" stroke="#1a1a1a" stroke-width=".9"/><path d="M5.9 114.86h1.5" stroke="#1a1a1a" stroke-width=".9"/><path d="M6.5 117.39h0.9" stroke="#1a1a1a" stroke-width=".9"/><text transform="translate(4.600,104.14) rotate(-90)" font-size="4.300" fill="#333" font-family="Liberation Sans,sans-serif">120</text><path d="M0 119.92h7.400" stroke="#666" stroke-width=".7"/><path d="M6.5 122.45h0.9" stroke="#1a1a1a" stroke-width=".9"/><path d="M5.9 124.98h1.5" stroke="#1a1a1a" stroke-width=".9"/><path d="M6.5 127.50h0.9" stroke="#1a1a1a" stroke-width=".9"/><path d="M5.9 130.03h1.5" stroke="#1a1a1a" stroke-width=".9"/><path d="M6.5 132.56h0.9" stroke="#1a1a1a" stroke-width=".9"/><path d="M5.9 135.09h1.5" stroke="#1a1a1a" stroke-width=".9"/><path d="M6.5 137.62h0.9" stroke="#1a1a1a" stroke-width=".9"/><path d="M5.9 140.14h1.5" stroke="#1a1a1a" stroke-width=".9"/><path d="M6.5 142.67h0.9" stroke="#1a1a1a" stroke-width=".9"/><text transform="translate(4.600,129.42) rotate(-90)" font-size="4.300" fill="#333" font-family="Liberation Sans,sans-serif">125</text><path d="M0 145.20h7.400" stroke="#666" stroke-width=".7"/><path d="M6.5 147.73h0.9" stroke="#1a1a1a" stroke-width=".9"/><path d="M5.9 150.26h1.5" stroke="#1a1a1a" stroke-width=".9"/><path d="M6.5 152.78h0.9" stroke="#1a1a1a" stroke-width=".9"/><path d="M5.9 155.31h1.5" stroke="#1a1a1a" stroke-width=".9"/><path d="M6.5 157.84h0.9" stroke="#1a1a1a" stroke-width=".9"/><path d="M5.9 160.37h1.5" stroke="#1a1a1a" stroke-width=".9"/><path d="M6.5 162.90h0.9" stroke="#1a1a1a" stroke-width=".9"/><path d="M5.9 165.42h1.5" stroke="#1a1a1a" stroke-width=".9"/><path d="M6.5 167.95h0.9" stroke="#1a1a1a" stroke-width=".9"/><text transform="translate(4.600,154.70) rotate(-90)" font-size="4.300" fill="#333" font-family="Liberation Sans,sans-serif">130</text><path d="M0 170.48h7.400" stroke="#666" stroke-width=".7"/><path d="M6.5 173.01h0.9" stroke="#1a1a1a" stroke-width=".9"/><path d="M5.9 175.54h1.5" stroke="#1a1a1a" stroke-width=".9"/><path d="M6.5 178.06h0.9" stroke="#1a1a1a" stroke-width=".9"/><path d="M5.9 180.59h1.5" stroke="#1a1a1a" stroke-width=".9"/><path d="M6.5 183.12h0.9" stroke="#1a1a1a" stroke-width=".9"/><path d="M5.9 185.65h1.5" stroke="#1a1a1a" stroke-width=".9"/><path d="M6.5 188.18h0.9" stroke="#1a1a1a" stroke-width=".9"/><path d="M5.9 190.70h1.5" stroke="#1a1a1a" stroke-width=".9"/><path d="M6.5 193.23h0.9" stroke="#1a1a1a" stroke-width=".9"/><text transform="translate(4.600,179.98) rotate(-90)" font-size="4.300" fill="#333" font-family="Liberation Sans,sans-serif">135</text><path d="M0 195.76h7.400" stroke="#666" stroke-width=".7"/><path d="M6.5 198.29h0.9" stroke="#1a1a1a" stroke-width=".9"/><path d="M5.9 200.82h1.5" stroke="#1a1a1a" stroke-width=".9"/><path d="M6.5 203.34h0.9" stroke="#1a1a1a" stroke-width=".9"/><path d="M5.9 205.87h1.5" stroke="#1a1a1a" stroke-width=".9"/><path d="M6.5 208.40h0.9" stroke="#1a1a1a" stroke-width=".9"/><path d="M5.9 210.93h1.5" stroke="#1a1a1a" stroke-width=".9"/><path d="M6.5 213.46h0.9" stroke="#1a1a1a" stroke-width=".9"/><path d="M5.9 215.98h1.5" stroke="#1a1a1a" stroke-width=".9"/><path d="M6.5 218.51h0.9" stroke="#1a1a1a" stroke-width=".9"/><text transform="translate(4.600,205.26) rotate(-90)" font-size="4.300" fill="#333" font-family="Liberation Sans,sans-serif">140</text><path d="M0 221.04h7.400" stroke="#666" stroke-width=".7"/><path d="M6.5 223.57h0.9" stroke="#1a1a1a" stroke-width=".9"/><path d="M5.9 226.10h1.5" stroke="#1a1a1a" stroke-width=".9"/><path d="M6.5 228.62h0.9" stroke="#1a1a1a" stroke-width=".9"/><path d="M5.9 231.15h1.5" stroke="#1a1a1a" stroke-width=".9"/><path d="M6.5 233.68h0.9" stroke="#1a1a1a" stroke-width=".9"/><path d="M5.9 236.21h1.5" stroke="#1a1a1a" stroke-width=".9"/><path d="M6.5 238.74h0.9" stroke="#1a1a1a" stroke-width=".9"/><path d="M5.9 241.26h1.5" stroke="#1a1a1a" stroke-width=".9"/><path d="M6.5 243.79h0.9" stroke="#1a1a1a" stroke-width=".9"/><text transform="translate(4.600,230.54) rotate(-90)" font-size="4.300" fill="#333" font-family="Liberation Sans,sans-serif">145</text><path d="M0 246.32h7.400" stroke="#666" stroke-width=".7"/><path d="M6.5 248.85h0.9" stroke="#1a1a1a" stroke-width=".9"/><path d="M5.9 251.38h1.5" stroke="#1a1a1a" stroke-width=".9"/><path d="M6.5 253.90h0.9" stroke="#1a1a1a" stroke-width=".9"/><path d="M5.9 256.43h1.5" stroke="#1a1a1a" stroke-width=".9"/><path d="M6.5 258.96h0.9" stroke="#1a1a1a" stroke-width=".9"/><path d="M5.9 261.49h1.5" stroke="#1a1a1a" stroke-width=".9"/><path d="M6.5 264.02h0.9" stroke="#1a1a1a" stroke-width=".9"/><path d="M5.9 266.54h1.5" stroke="#1a1a1a" stroke-width=".9"/><path d="M6.5 269.07h0.9" stroke="#1a1a1a" stroke-width=".9"/><text transform="translate(4.600,255.82) rotate(-90)" font-size="4.300" fill="#333" font-family="Liberation Sans,sans-serif">150</text><path d="M0 271.60h7.400" stroke="#666" stroke-width=".7"/><path d="M6.5 274.13h0.9" stroke="#1a1a1a" stroke-width=".9"/><path d="M5.9 276.66h1.5" stroke="#1a1a1a" stroke-width=".9"/><path d="M6.5 279.18h0.9" stroke="#1a1a1a" stroke-width=".9"/><path d="M5.9 281.71h1.5" stroke="#1a1a1a" stroke-width=".9"/><path d="M6.5 284.24h0.9" stroke="#1a1a1a" stroke-width=".9"/><path d="M5.9 286.77h1.5" stroke="#1a1a1a" stroke-width=".9"/><path d="M6.5 289.30h0.9" stroke="#1a1a1a" stroke-width=".9"/><path d="M5.9 291.82h1.5" stroke="#1a1a1a" stroke-width=".9"/><path d="M6.5 294.35h0.9" stroke="#1a1a1a" stroke-width=".9"/><text transform="translate(4.600,281.10) rotate(-90)" font-size="4.300" fill="#333" font-family="Liberation Sans,sans-serif">155</text><path d="M0 296.88h7.400" stroke="#666" stroke-width=".7"/><path d="M6.5 299.41h0.9" stroke="#1a1a1a" stroke-width=".9"/><path d="M5.9 301.94h1.5" stroke="#1a1a1a" stroke-width=".9"/><path d="M6.5 304.46h0.9" stroke="#1a1a1a" stroke-width=".9"/><path d="M5.9 306.99h1.5" stroke="#1a1a1a" stroke-width=".9"/><path d="M6.5 309.52h0.9" stroke="#1a1a1a" stroke-width=".9"/><path d="M5.9 312.05h1.5" stroke="#1a1a1a" stroke-width=".9"/><path d="M6.5 314.58h0.9" stroke="#1a1a1a" stroke-width=".9"/><path d="M5.9 317.10h1.5" stroke="#1a1a1a" stroke-width=".9"/><path d="M6.5 319.63h0.9" stroke="#1a1a1a" stroke-width=".9"/><text transform="translate(4.600,306.38) rotate(-90)" font-size="4.300" fill="#333" font-family="Liberation Sans,sans-serif">160</text><path d="M0 322.16h7.400" stroke="#666" stroke-width=".7"/><path d="M6.5 324.69h0.9" stroke="#1a1a1a" stroke-width=".9"/><path d="M5.9 327.22h1.5" stroke="#1a1a1a" stroke-width=".9"/><path d="M6.5 329.74h0.9" stroke="#1a1a1a" stroke-width=".9"/><path d="M5.9 332.27h1.5" stroke="#1a1a1a" stroke-width=".9"/><path d="M6.5 334.80h0.9" stroke="#1a1a1a" stroke-width=".9"/><path d="M5.9 337.33h1.5" stroke="#1a1a1a" stroke-width=".9"/><text transform="translate(4.600,331.66) rotate(-90)" font-size="4.300" fill="#333" font-family="Liberation Sans,sans-serif">165</text></svg>
<div style="left:51.2px;top:62.1px;width:488px;height:330.5px;background:#fff28b"></div>
<div style="left:507px;top:62.1px;width:1px;height:330.5px;background:#bcc4bc"></div>
<svg style="left:0;top:0" width="640" height="400" viewBox="0 0 640 400">
<defs>
<radialGradient id="h1" cx=".5" cy=".5" r=".5"><stop offset="0" stop-color="#8e88a0" stop-opacity=".95"/><stop offset=".5" stop-color="#5e566e" stop-opacity=".7"/><stop offset="1" stop-color="#3a2c4a" stop-opacity="0"/></radialGradient>
<radialGradient id="h2" cx=".5" cy=".5" r=".5"><stop offset="0" stop-color="#d0d2da" stop-opacity="1"/><stop offset=".25" stop-color="#c0c2cc" stop-opacity=".95"/><stop offset=".55" stop-color="#86829a" stop-opacity=".8"/><stop offset="1" stop-color="#3a2c4a" stop-opacity="0"/></radialGradient>
<clipPath id="ec"><path d="M212.0 101.0C213.5 98.2 216.2 102.1 220.0 103.5C223.8 104.9 230.0 107.2 235.0 109.5C240.0 111.8 245.0 114.5 250.0 117.5C255.0 120.5 260.0 123.8 265.0 127.5C270.0 131.2 275.0 135.8 280.0 140.0C285.0 144.2 290.0 148.1 295.0 152.6C300.0 157.1 305.0 162.1 310.0 167.0C315.0 171.9 320.0 176.7 325.0 182.0C330.0 187.3 335.5 193.1 340.0 198.6C344.5 204.1 348.3 209.4 352.0 215.0C355.7 220.6 359.0 226.5 362.0 232.0C365.0 237.5 367.8 243.0 370.0 248.0C372.2 253.0 373.8 257.7 375.0 262.0C376.2 266.3 377.1 269.7 377.0 274.0C376.9 278.3 376.2 283.8 374.5 288.0C372.8 292.2 370.4 296.4 367.0 299.0C363.6 301.6 358.5 302.8 354.0 303.5C349.5 304.2 345.7 304.1 340.0 303.0C334.3 301.9 326.5 299.9 320.0 297.0C313.5 294.1 307.2 290.2 301.0 285.5C294.8 280.8 287.7 273.4 283.0 268.5C278.3 263.6 276.3 260.2 273.0 256.0C269.7 251.8 266.6 248.2 263.0 243.5C259.4 238.8 255.2 233.6 251.5 228.0C247.8 222.4 244.0 216.0 240.5 210.0C237.0 204.0 233.9 198.7 230.5 192.0C227.1 185.3 222.8 175.3 220.0 170.0C217.2 164.7 215.5 165.0 214.0 160.0C212.5 155.0 211.5 146.7 211.0 140.0C210.5 133.3 210.8 126.5 211.0 120.0C211.2 113.5 210.5 103.8 212.0 101.0z"/></clipPath>
<clipPath id="sc"><path d="M208.0 99.6C210.0 99.1 212.2 100.0 215.0 101.0C217.8 102.0 222.3 104.3 225.0 105.6C227.7 106.8 230.8 106.4 231.0 108.5C231.2 110.6 227.7 114.1 226.0 118.0C224.3 121.9 222.4 127.0 221.0 132.0C219.6 137.0 218.5 143.7 217.5 148.0C216.5 152.3 215.9 156.4 215.0 158.0C214.1 159.6 213.2 156.8 212.0 157.5C210.8 158.2 209.2 161.8 207.5 162.4C205.8 163.0 203.0 162.6 202.0 161.2C201.0 159.8 201.8 156.2 201.6 154.0C201.4 151.8 201.7 150.7 201.0 148.0C200.3 145.3 198.0 141.3 197.2 138.0C196.4 134.7 195.5 131.3 196.0 128.0C196.5 124.7 198.7 121.0 200.0 118.0C201.3 115.0 203.5 112.3 204.0 110.0C204.5 107.7 202.3 105.7 203.0 104.0C203.7 102.3 206.0 100.1 208.0 99.6z"/></clipPath>
<filter id="bl" filterUnits="userSpaceOnUse" x="150" y="70" width="270" height="260"><feGaussianBlur stdDeviation="1"/></filter>
<filter id="bl2" filterUnits="userSpaceOnUse" x="150" y="70" width="270" height="260"><feGaussianBlur stdDeviation="3"/></filter>
<filter id="bl3" filterUnits="userSpaceOnUse" x="150" y="70" width="270" height="260"><feGaussianBlur stdDeviation="5"/></filter>
</defs>
<path d="M212.0 101.0C213.5 98.2 216.2 102.1 220.0 103.5C223.8 104.9 230.0 107.2 235.0 109.5C240.0 111.8 245.0 114.5 250.0 117.5C255.0 120.5 260.0 123.8 265.0 127.5C270.0 131.2 275.0 135.8 280.0 140.0C285.0 144.2 290.0 148.1 295.0 152.6C300.0 157.1 305.0 162.1 310.0 167.0C315.0 171.9 320.0 176.7 325.0 182.0C330.0 187.3 335.5 193.1 340.0 198.6C344.5 204.1 348.3 209.4 352.0 215.0C355.7 220.6 359.0 226.5 362.0 232.0C365.0 237.5 367.8 243.0 370.0 248.0C372.2 253.0 373.8 257.7 375.0 262.0C376.2 266.3 377.1 269.7 377.0 274.0C376.9 278.3 376.2 283.8 374.5 288.0C372.8 292.2 370.4 296.4 367.0 299.0C363.6 301.6 358.5 302.8 354.0 303.5C349.5 304.2 345.7 304.1 340.0 303.0C334.3 301.9 326.5 299.9 320.0 297.0C313.5 294.1 307.2 290.2 301.0 285.5C294.8 280.8 287.7 273.4 283.0 268.5C278.3 263.6 276.3 260.2 273.0 256.0C269.7 251.8 266.6 248.2 263.0 243.5C259.4 238.8 255.2 233.6 251.5 228.0C247.8 222.4 244.0 216.0 240.5 210.0C237.0 204.0 233.9 198.7 230.5 192.0C227.1 185.3 222.8 175.3 220.0 170.0C217.2 164.7 215.5 165.0 214.0 160.0C212.5 155.0 211.5 146.7 211.0 140.0C210.5 133.3 210.8 126.5 211.0 120.0C211.2 113.5 210.5 103.8 212.0 101.0z" fill="#18131b"/>
<g clip-path="url(#ec)">
<!-- broad purple sheen -->
<path d="M268 154C291 172 318 200 346 244" stroke="#3b3348" stroke-width="24" fill="none" filter="url(#bl3)" opacity=".8"/>
<path d="M296 178C309 190 325 208 339 230" stroke="#6a5e82" stroke-width="10" fill="none" filter="url(#bl2)" opacity=".95"/>
<!-- black band along upper edge -->
<path d="M228 104C250 114 280 136 310 163C330 183 352 212 372 250C378 262 380 275 378 290" stroke="#08070a" stroke-width="10" fill="none" filter="url(#bl2)"/>
<path d="M232 110C250 118 265 128 280 141" stroke="#161c0c" stroke-width="9" fill="none" filter="url(#bl2)" opacity=".9"/>
<!-- dark lower-left edge -->
<path d="M212 150C228 195 255 245 290 280C312 298 340 306 360 304" stroke="#0b080e" stroke-width="8" fill="none" filter="url(#bl2)" opacity=".9"/>
<path d="M218 120C225 150 243 190 265 225" stroke="#262029" stroke-width="12" fill="none" filter="url(#bl3)" opacity=".6"/>
<!-- bright highlights -->
<ellipse cx="319" cy="259" rx="10" ry="21" fill="url(#h2)" transform="rotate(-39 319 259)"/>
<ellipse cx="338" cy="241" rx="14" ry="7" fill="url(#h1)" transform="rotate(40 338 241)"/><path d="M322 240C330 248 338 256 344 266" stroke="#120e16" stroke-width="5" fill="none" filter="url(#bl2)" opacity=".7"/>

<path d="M372 279L373 291" stroke="#8a3a2a" stroke-width="1.600" opacity=".8" filter="url(#bl)"/>
<path d="M228 147l2.500 3M241 160l5 9M263 196l5 .5M251 206l2 .8M300 250l1 4" stroke="#9a8632" stroke-width=".7" opacity=".85"/>
</g>
<!-- stem / calyx -->
<path d="M208.0 99.6C210.0 99.1 212.2 100.0 215.0 101.0C217.8 102.0 222.3 104.3 225.0 105.6C227.7 106.8 230.8 106.4 231.0 108.5C231.2 110.6 227.7 114.1 226.0 118.0C224.3 121.9 222.4 127.0 221.0 132.0C219.6 137.0 218.5 143.7 217.5 148.0C216.5 152.3 215.9 156.4 215.0 158.0C214.1 159.6 213.2 156.8 212.0 157.5C210.8 158.2 209.2 161.8 207.5 162.4C205.8 163.0 203.0 162.6 202.0 161.2C201.0 159.8 201.8 156.2 201.6 154.0C201.4 151.8 201.7 150.7 201.0 148.0C200.3 145.3 198.0 141.3 197.2 138.0C196.4 134.7 195.5 131.3 196.0 128.0C196.5 124.7 198.7 121.0 200.0 118.0C201.3 115.0 203.5 112.3 204.0 110.0C204.5 107.7 202.3 105.7 203.0 104.0C203.7 102.3 206.0 100.1 208.0 99.6z" fill="#2a262b"/>
<g clip-path="url(#sc)">
<path d="M198 125C200 140 203 150 204 162" stroke="#1a141c" stroke-width="5" fill="none" filter="url(#bl)"/>
<path d="M206 104C210 120 210 140 208 160" stroke="#37323a" stroke-width="5" fill="none" filter="url(#bl)"/>
<path d="M204.500 111C212 111.500 221 110.500 229 108.500" stroke="#7c7c2c" stroke-width="1.600" fill="none" opacity=".85" filter="url(#bl)"/>
<path d="M204 100C210 99 218 101 230 107" stroke="#15110f" stroke-width="5" fill="none" filter="url(#bl)"/>
</g>
<path d="M223 112C220.500 120 218.500 128 217.300 138" stroke="#a02c80" stroke-width="2.600" fill="none" filter="url(#bl)" opacity=".9"/><path d="M217.300 138C216.600 143 216 148 215.600 153" stroke="#8a2a70" stroke-width="1.800" fill="none" filter="url(#bl)" opacity=".85"/>
<path d="M222.600 113C220.500 120 219 126 218 134" stroke="#cc58a8" stroke-width="1" fill="none" filter="url(#bl)" opacity=".7"/>
</svg>
<svg style="left:0px;top:0px;" width="640" height="400" viewBox="0 0 640 400" preserveAspectRatio="none"><rect x="167.6" y="84.85" width="234.1" height="234.04999999999998" fill="none" stroke="#a9c0cf" stroke-width="1.200"/><rect x="166.20" y="83.45" width="2.800" height="2.800" rx=".8" fill="#fdfdfd" stroke="#7aa6dc" stroke-width=".7"/><rect x="283.25" y="83.45" width="2.800" height="2.800" rx=".8" fill="#fdfdfd" stroke="#7aa6dc" stroke-width=".7"/><rect x="400.30" y="83.45" width="2.800" height="2.800" rx=".8" fill="#fdfdfd" stroke="#7aa6dc" stroke-width=".7"/><rect x="166.20" y="200.47" width="2.800" height="2.800" rx=".8" fill="#fdfdfd" stroke="#7aa6dc" stroke-width=".7"/><rect x="400.30" y="200.47" width="2.800" height="2.800" rx=".8" fill="#fdfdfd" stroke="#7aa6dc" stroke-width=".7"/><rect x="166.20" y="317.50" width="2.800" height="2.800" rx=".8" fill="#fdfdfd" stroke="#7aa6dc" stroke-width=".7"/><rect x="283.25" y="317.50" width="2.800" height="2.800" rx=".8" fill="#fdfdfd" stroke="#7aa6dc" stroke-width=".7"/><rect x="400.30" y="317.50" width="2.800" height="2.800" rx=".8" fill="#fdfdfd" stroke="#7aa6dc" stroke-width=".7"/><rect x="171.400" y="83.500" width="5.600" height="2.700" rx="1.300" fill="#3f74c4"/><rect x="353.300" y="83.200" width="3.400" height="3.400" fill="#1f6ff0"/></svg>
<div style="left:539.2px;top:53.8px;width:6.4px;height:339px;background:#ececec"></div>
<div style="left:539.2px;top:55.5px;width:6.3px;height:323px;background:linear-gradient(90deg,#b4b4b4,#ececec 22%,#fff 50%,#fff);border-radius:3.100px"></div>
<div style="left:539.4px;top:177.5px;width:6.1px;height:57px;background:linear-gradient(90deg,#4585dc,#9ccafb 40%,#78b2f4 60%,#3a78d0);border-radius:3px;box-shadow:0 0 0 .3px #3a6ab8"></div>
<svg style="left:541px;top:380px;" width="3" height="3" viewBox="0 -0.5 3 3" preserveAspectRatio="none"><path d="M1.500 0L3 2.400H0z" fill="#222"/></svg>
<svg style="left:541px;top:387px;" width="3" height="3" viewBox="0 0 3 3" preserveAspectRatio="none"><path d="M1.500 2.400L3 0H0z" fill="#222"/></svg>
<div style="left:43.8px;top:392.6px;width:502.4px;height:7.4px;background:#e6e6e6;border-top:0.600px solid #8a8a8a"></div>
<svg style="left:45px;top:394px;" width="4" height="4" viewBox="0 -0.8 4 4" preserveAspectRatio="none"><path d="M.3 0v3" stroke="#222" stroke-width=".6"/><path d="M3.200 0v3L.8 1.500z" fill="#222"/></svg>
<svg style="left:51px;top:394px;" width="4" height="4" viewBox="-0.8 -0.8 4 4" preserveAspectRatio="none"><path d="M2.400 0v3L0 1.500z" fill="#222"/></svg>
<div style="left:55.5px;top:393.4px;width:38.5px;height:6.2px;background:#fff;border:0.500px solid #aaa"></div>
<div class="t" style="left:58px;top:394px;font-size:4.3px;color:#222;font-weight:normal;">A-マスター</div>
<svg style="left:96px;top:395px;" width="3" height="3" viewBox="0 -0.4 3 3" preserveAspectRatio="none"><path d="M0 0h3L1.500 2.200z" fill="#222"/></svg>
<svg style="left:103px;top:394px;" width="4" height="4" viewBox="-0.5 -0.8 4 4" preserveAspectRatio="none"><path d="M0 0v3l2.400-1.500z" fill="#222"/></svg>
<svg style="left:109px;top:394px;" width="4" height="4" viewBox="-0.5 -0.8 4 4" preserveAspectRatio="none"><path d="M3.100 0v3" stroke="#222" stroke-width=".6"/><path d="M0 0v3l2.400-1.500z" fill="#222"/></svg>
<svg style="left:116px;top:393px;" width="8" height="7" viewBox="-0.8 -0.6 8 7" preserveAspectRatio="none"><rect x=".3" y=".3" width="3.800" height="4.600" fill="#f4f4f4" stroke="#333" stroke-width=".5"/><circle cx="3.600" cy="3.400" r="1.700" fill="#ddd" stroke="#222" stroke-width=".6"/><path d="M4.800 4.600L6.200 5.800" stroke="#222" stroke-width=".8"/></svg>
<div style="left:127.400px;top:393.800px;width:5.200px;height:5.200px;border-radius:50%;background:radial-gradient(circle at 40% 35%,#a8f08a,#2fb41e 55%,#147a0c)"></div>
<div class="t" style="left:134.5px;top:394.2px;font-size:3.9px;color:#222;font-weight:normal;">エラーなし</div>
<svg style="left:171px;top:395px;" width="3" height="3" viewBox="-0.4 -0.6 3 3" preserveAspectRatio="none"><path d="M0 0h2.600L1.300 2z" fill="#222"/></svg>
<div style="left:177px;top:393.2px;width:0.6px;height:6.8px;background:#999"></div>
<div style="left:179.5px;top:393.3px;width:337.5px;height:5.6px;background:linear-gradient(#b4b4b4,#ececec 22%,#fff 50%,#fff);border-radius:3px"></div>
<div style="left:347px;top:393.2px;width:48.6px;height:5.9px;background:linear-gradient(#4585dc,#9ccafb 40%,#78b2f4 60%,#3a78d0);border-radius:3px;box-shadow:0 0 0 .3px #3a6ab8"></div>
<svg style="left:520px;top:395px;" width="3" height="3" viewBox="0 -0.2 3 3" preserveAspectRatio="none"><path d="M2.400 0v2.800L0 1.400z" fill="#222"/></svg>
<svg style="left:526px;top:395px;" width="3" height="3" viewBox="0 -0.2 3 3" preserveAspectRatio="none"><path d="M0 0v2.800l2.400-1.400z" fill="#222"/></svg>
<svg style="left:532px;top:394px;" width="5" height="5" viewBox="-0.5 -0.4 5 5" preserveAspectRatio="none"><path d="M.8 0v4.400M3.200 0v4.400" stroke="#444" stroke-width="1"/></svg>
<div style="left:539px;top:392.6px;width:7.2px;height:7.4px;background:#e6e6e6"></div>
<div style="left:545.5px;top:50.4px;width:1.7px;height:350px;background:#6c6c6c"></div>
<div style="left:547.2px;top:50.4px;width:15.9px;height:350px;background:#efefef;border-top:0.600px solid #fafafa"></div>
<div style="left:563.1px;top:50.4px;width:1.7px;height:350px;background:#666"></div>
<div style="left:564.8px;top:50.4px;width:73.8px;height:350px;background:#efefef;border-top:0.600px solid #fafafa"></div>
<div style="left:638.3px;top:50.4px;width:1.7px;height:350px;background:#dcdcdc;border-left:0.600px solid #aaa"></div>
<div style="left:551.3px;top:53px;width:8.6px;height:1.4px;background:#c4c4c4;border-radius:.5px"></div>
<svg style="left:552px;top:58px;" width="8" height="7" viewBox="0 0 8 7" preserveAspectRatio="none"><path d="M.5 0V6.600" stroke="#222" stroke-width=".7"/><rect x="1.300" y=".8" width="3" height="1.700" fill="#4a4a4a"/><rect x="1.300" y="3.500" width="6.400" height="2.600" fill="#111"/></svg>
<svg style="left:551px;top:70px;" width="9" height="8" viewBox="-0.6 0 9 8" preserveAspectRatio="none"><rect x="1.200" y="1.200" width="5.600" height="5.600" fill="none" stroke="#222" stroke-width=".7" stroke-dasharray="1.200 .8"/><rect x="0" y="0" width="2" height="2" fill="#222"/><rect x="6" y="0" width="2" height="2" fill="#222"/><rect x="0" y="6" width="2" height="2" fill="#222"/><rect x="6" y="6" width="2" height="2" fill="#222"/></svg>
<svg style="left:551px;top:83px;" width="9" height="8" viewBox="-0.6 0 9 8" preserveAspectRatio="none"><rect x=".4" y=".4" width="4.400" height="4.400" fill="#555" stroke="#222" stroke-width=".6"/><rect x="3" y="3" width="4.400" height="4.400" fill="#111"/></svg>
<div style="left:547.2px;top:93.6px;width:16.6px;height:1.2px;background:linear-gradient(#a6a6a6 50%,#fdfdfd 50%)"></div>
<div style="left:551.3px;top:96.6px;width:8.6px;height:1.4px;background:#c4c4c4;border-radius:.5px"></div>
<svg style="left:551px;top:101px;" width="9" height="8" viewBox="-0.6 -0.8 9 8" preserveAspectRatio="none"><rect x=".3" y=".3" width="7.600" height="6.200" fill="#6a6a6a" stroke="#333" stroke-width=".6"/><rect x="1.500" y="1.400" width="5.200" height="4" fill="#e4e4e4"/><rect x="2.500" y="2.100" width="3.200" height="2.600" fill="#222"/></svg>
<div style="left:547.2px;top:112.4px;width:16.6px;height:1.2px;background:linear-gradient(#a6a6a6 50%,#fdfdfd 50%)"></div>
<div style="left:551.3px;top:115.4px;width:8.6px;height:1.4px;background:#c4c4c4;border-radius:.5px"></div>
<div class="t" style="left:551.6px;top:118.400px;font-size:7.600px;font-style:italic;font-weight:normal;color:#1a1a1a;font-family:'Liberation Serif',serif">fx</div>
<div style="left:547.2px;top:131px;width:16.6px;height:1.2px;background:linear-gradient(#a6a6a6 50%,#fdfdfd 50%)"></div>
<div style="left:551.3px;top:134px;width:8.6px;height:1.4px;background:#c4c4c4;border-radius:.5px"></div>
<svg style="left:551px;top:139px;" width="9" height="7" viewBox="-0.6 -0.4 9 7" preserveAspectRatio="none"><path d="M0 .6h8" stroke="#222" stroke-width=".6"/><path d="M0 2.400h8" stroke="#222" stroke-width="1"/><path d="M0 4.800h8" stroke="#222" stroke-width="1.800"/></svg>
<div style="left:547.2px;top:148.6px;width:16.6px;height:1.2px;background:linear-gradient(#a6a6a6 50%,#fdfdfd 50%)"></div>
<div style="left:551.3px;top:151.6px;width:8.6px;height:1.4px;background:#c4c4c4;border-radius:.5px"></div>
<svg style="left:551px;top:155px;" width="9" height="9" viewBox="-0.6 -0.4 9 9" preserveAspectRatio="none"><rect x=".4" y=".4" width="7.200" height="7.200" fill="#eee" stroke="#333" stroke-width=".7"/><rect x=".4" y=".4" width="7.200" height="2" fill="#444"/><rect x="4" y="3.400" width="2.800" height="3.200" fill="#666"/></svg>
<svg style="left:551px;top:168px;" width="9" height="8" viewBox="-0.6 0 9 8" preserveAspectRatio="none"><rect x="2" y=".4" width="5.600" height="5.200" fill="#ddd" stroke="#333" stroke-width=".6"/><rect x=".4" y="2.200" width="5" height="4.600" fill="#f4f4f4" stroke="#333" stroke-width=".6"/><path d="M3 7.600h3" stroke="#222" stroke-width=".8"/></svg>
<svg style="left:551px;top:180px;" width="9" height="9" viewBox="-0.6 -0.8 9 9" preserveAspectRatio="none"><rect x="2" y=".4" width="5.600" height="5.200" fill="#555" stroke="#222" stroke-width=".6"/><rect x=".4" y="2.200" width="5" height="4.600" fill="#eee" stroke="#333" stroke-width=".6"/><path d="M3 7.600h3" stroke="#222" stroke-width=".8"/></svg>
<div style="left:547.2px;top:192.4px;width:16.6px;height:1.2px;background:linear-gradient(#a6a6a6 50%,#fdfdfd 50%)"></div>
<div style="left:551.3px;top:195.4px;width:8.6px;height:1.4px;background:#c4c4c4;border-radius:.5px"></div>
<svg style="left:552px;top:199px;" width="8" height="9" viewBox="-0.2 -0.8 8 9" preserveAspectRatio="none"><path d="M2 .4h4.400v5.600H2z" fill="#ddd" stroke="#333" stroke-width=".6"/><path d="M.4 2h4.400v5.600H.4z" fill="#f4f4f4" stroke="#333" stroke-width=".6"/></svg>
<div style="left:547.2px;top:212.4px;width:16.6px;height:1.2px;background:linear-gradient(#a6a6a6 50%,#fdfdfd 50%)"></div>
<div style="left:551.3px;top:215.4px;width:8.6px;height:1.4px;background:#c4c4c4;border-radius:.5px"></div>
<svg style="left:551px;top:217px;" width="9" height="8" viewBox="-0.6 -0.4 9 8" preserveAspectRatio="none"><rect x=".3" y=".3" width="7.400" height="6.800" fill="#2a2a2a"/><path d="M1.400 5.600V2.600h1.200v3M3.600 5.600V2.600h1c1 0 1 1.400 0 1.400h-1M6 5.600v-2" stroke="#ddd" stroke-width=".6" fill="none"/></svg>
<div style="left:547.2px;top:229px;width:16.6px;height:1.2px;background:linear-gradient(#a6a6a6 50%,#fdfdfd 50%)"></div>
<div style="left:551.3px;top:232px;width:8.6px;height:1.4px;background:#c4c4c4;border-radius:.5px"></div>
<svg style="left:553px;top:235px;" width="6" height="9" viewBox="0 -0.6 6 9" preserveAspectRatio="none"><circle cx="2.600" cy="2.800" r="2.200" fill="#fafafa" stroke="#333" stroke-width=".7"/><rect x="1.600" y="5.200" width="2" height="2.400" fill="#333"/></svg>
<svg style="left:551px;top:248px;" width="9" height="8" viewBox="-0.6 0 9 8" preserveAspectRatio="none"><rect x=".4" y=".4" width="4.800" height="4.400" fill="#ccc" stroke="#444" stroke-width=".6"/><rect x="2.400" y="2.400" width="5" height="5" fill="#999" stroke="#444" stroke-width=".6"/></svg>
<div style="left:547.2px;top:260px;width:16.6px;height:1.2px;background:linear-gradient(#a6a6a6 50%,#fdfdfd 50%)"></div>
<div style="left:597.5px;top:53px;width:9px;height:1.4px;background:#c4c4c4;border-radius:.5px"></div>
<svg style="left:570px;top:58px;" width="9" height="8" viewBox="0 -0.4 9 8" preserveAspectRatio="none"><path d="M4.500 .4L8.600 2.800 4.500 5.200 .4 2.800z" fill="#222"/><path d="M.4 4.400l4.100 2.400 4.100-2.400" fill="none" stroke="#222" stroke-width=".7"/><path d="M4.500 1.600l2 1.200-2 1.200-2-1.200z" fill="#888"/></svg>
<div class="t" style="left:582px;top:59.3px;font-size:4.7px;color:#222;font-weight:normal;">レイヤー</div>
<svg style="left:570px;top:70px;" width="9" height="8" viewBox="0 -0.2 9 8" preserveAspectRatio="none"><path d="M1.200 6.800V2.800L3 .8h3.200l1.600 2v4z" fill="#f4f4f4" stroke="#333" stroke-width=".7"/><path d="M4.500 .8v6M.2 6.800h8.600" stroke="#333" stroke-width=".6"/><path d="M2.400 4.400h1.200M5.400 4.400h1.200" stroke="#555" stroke-width=".5"/></svg>
<div class="t" style="left:582px;top:71px;font-size:4.7px;color:#222;font-weight:normal;">ページ</div>
<div style="left:565.2px;top:81px;width:73.4px;height:1.2px;background:linear-gradient(#a6a6a6 50%,#fdfdfd 50%)"></div>
<div style="left:597.5px;top:84px;width:9px;height:1.4px;background:#c4c4c4;border-radius:.5px"></div>
<div class="t" style="left:570.400px;top:87.600px;font-size:8px;color:#222;font-family:'Liberation Serif','Noto Serif CJK SC','Noto Sans CJK JP',serif">段</div>
<div class="t" style="left:582px;top:90px;font-size:4.5px;color:#222;font-weight:normal;">段落</div>
<div class="t" style="left:570.400px;top:100.600px;font-size:8px;color:#222;font-family:'Liberation Serif','Noto Serif CJK SC','Noto Sans CJK JP',serif">字</div>
<div class="t" style="left:582px;top:103px;font-size:4.5px;color:#222;font-weight:normal;">文字</div>
<div style="left:565.2px;top:112.4px;width:73.4px;height:1.2px;background:linear-gradient(#a6a6a6 50%,#fdfdfd 50%)"></div>
<div style="left:597.5px;top:115.4px;width:9px;height:1.4px;background:#c4c4c4;border-radius:.5px"></div>
<svg style="left:569px;top:119px;" width="11" height="8" viewBox="-0.8 -0.6 11 8" preserveAspectRatio="none"><circle cx="2.400" cy="2.400" r="1.800" fill="none" stroke="#222" stroke-width=".9"/><circle cx="7" cy="4.600" r="1.800" fill="none" stroke="#222" stroke-width=".9"/><path d="M3.400 3l2.800 1.200" stroke="#222" stroke-width="1"/></svg>
<div class="t" style="left:582px;top:120.4px;font-size:4.7px;color:#222;font-weight:normal;">リンク</div>
<div style="left:565.2px;top:131.2px;width:73.4px;height:1.2px;background:linear-gradient(#a6a6a6 50%,#fdfdfd 50%)"></div>
<div style="left:0px;top:398.7px;width:640px;height:1.3px;background:#6e6e6e"></div>
</div></div>
</body></html>
